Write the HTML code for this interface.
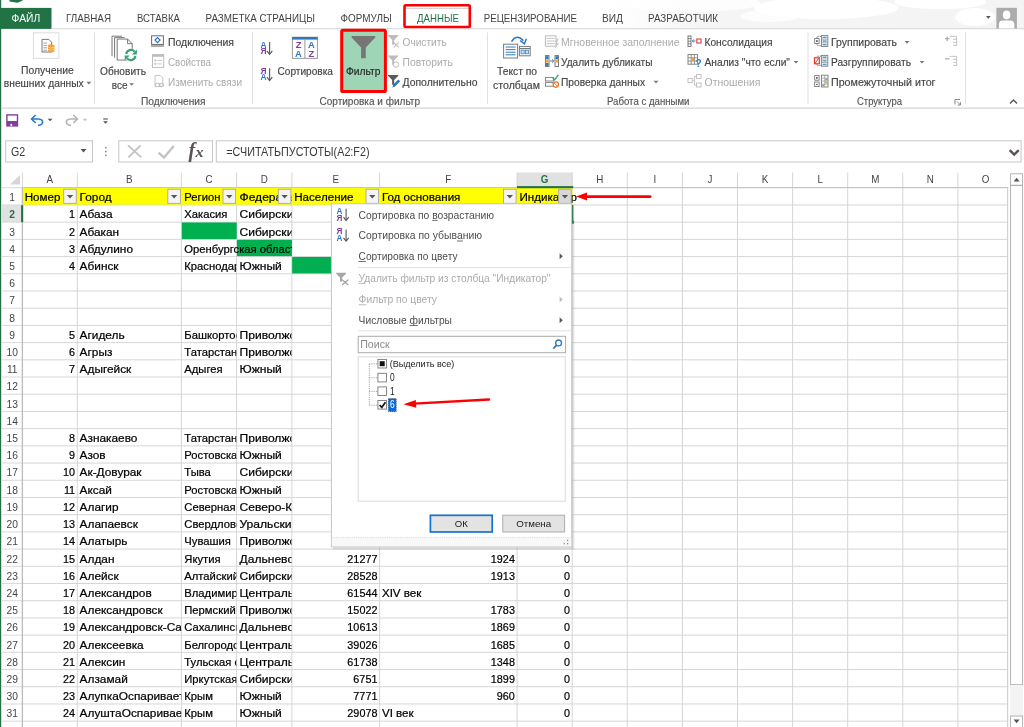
<!DOCTYPE html>
<html lang="ru">
<head>
<meta charset="utf-8">
<title>Excel - Фильтр</title>
<style>
html,body{margin:0;padding:0;background:#fff;overflow:hidden}
body{width:1024px;height:727px;font-family:"Liberation Sans",sans-serif}
svg{display:block;font-family:"Liberation Sans",sans-serif;will-change:transform}
text{white-space:pre}
</style>
</head>
<body>
<svg width="1024" height="727" viewBox="0 0 1024 727">
<g style="will-change:transform">
<rect x="0" y="0" width="1024" height="727" fill="#ffffff"/>
<rect x="2" y="172.5" width="1006" height="15.2" fill="#ffffff"/>
<rect x="517" y="172.5" width="55.3" height="14" fill="#e1e1e1"/>
<rect x="2" y="204.96" width="20.3" height="17.21" fill="#e1e1e1"/>
<rect x="22.4" y="187.75" width="54.9" height="17.21" fill="#ffff00"/>
<rect x="77.3" y="187.75" width="104.1" height="17.21" fill="#ffff00"/>
<rect x="181.4" y="187.75" width="55.2" height="17.21" fill="#ffff00"/>
<rect x="236.6" y="187.75" width="55.3" height="17.21" fill="#ffff00"/>
<rect x="291.9" y="187.75" width="87.7" height="17.21" fill="#ffff00"/>
<rect x="379.6" y="187.75" width="137.5" height="17.21" fill="#ffff00"/>
<rect x="517.1" y="187.75" width="55.1" height="17.21" fill="#ffff00"/>
<rect x="181.4" y="222.16" width="55.2" height="17.21" fill="#00b050"/>
<rect x="236.6" y="239.37" width="55.3" height="17.21" fill="#00b050"/>
<rect x="291.9" y="256.58" width="87.7" height="17.21" fill="#00b050"/>
<line x1="22.4" y1="187.75" x2="1007.7" y2="187.75" stroke="#d6d6d6" stroke-width="1"/>
<line x1="2" y1="187.75" x2="22.4" y2="187.75" stroke="#dadada" stroke-width="1"/>
<line x1="22.4" y1="204.96" x2="1007.7" y2="204.96" stroke="#d6d6d6" stroke-width="1"/>
<line x1="2" y1="204.96" x2="22.4" y2="204.96" stroke="#dadada" stroke-width="1"/>
<line x1="22.4" y1="222.16" x2="1007.7" y2="222.16" stroke="#d6d6d6" stroke-width="1"/>
<line x1="2" y1="222.16" x2="22.4" y2="222.16" stroke="#dadada" stroke-width="1"/>
<line x1="22.4" y1="239.37" x2="1007.7" y2="239.37" stroke="#d6d6d6" stroke-width="1"/>
<line x1="2" y1="239.37" x2="22.4" y2="239.37" stroke="#dadada" stroke-width="1"/>
<line x1="22.4" y1="256.58" x2="1007.7" y2="256.58" stroke="#d6d6d6" stroke-width="1"/>
<line x1="2" y1="256.58" x2="22.4" y2="256.58" stroke="#dadada" stroke-width="1"/>
<line x1="22.4" y1="273.78" x2="1007.7" y2="273.78" stroke="#d6d6d6" stroke-width="1"/>
<line x1="2" y1="273.78" x2="22.4" y2="273.78" stroke="#dadada" stroke-width="1"/>
<line x1="22.4" y1="290.99" x2="1007.7" y2="290.99" stroke="#d6d6d6" stroke-width="1"/>
<line x1="2" y1="290.99" x2="22.4" y2="290.99" stroke="#dadada" stroke-width="1"/>
<line x1="22.4" y1="308.2" x2="1007.7" y2="308.2" stroke="#d6d6d6" stroke-width="1"/>
<line x1="2" y1="308.2" x2="22.4" y2="308.2" stroke="#dadada" stroke-width="1"/>
<line x1="22.4" y1="325.41" x2="1007.7" y2="325.41" stroke="#d6d6d6" stroke-width="1"/>
<line x1="2" y1="325.41" x2="22.4" y2="325.41" stroke="#dadada" stroke-width="1"/>
<line x1="22.4" y1="342.61" x2="1007.7" y2="342.61" stroke="#d6d6d6" stroke-width="1"/>
<line x1="2" y1="342.61" x2="22.4" y2="342.61" stroke="#dadada" stroke-width="1"/>
<line x1="22.4" y1="359.82" x2="1007.7" y2="359.82" stroke="#d6d6d6" stroke-width="1"/>
<line x1="2" y1="359.82" x2="22.4" y2="359.82" stroke="#dadada" stroke-width="1"/>
<line x1="22.4" y1="377.03" x2="1007.7" y2="377.03" stroke="#d6d6d6" stroke-width="1"/>
<line x1="2" y1="377.03" x2="22.4" y2="377.03" stroke="#dadada" stroke-width="1"/>
<line x1="22.4" y1="394.23" x2="1007.7" y2="394.23" stroke="#d6d6d6" stroke-width="1"/>
<line x1="2" y1="394.23" x2="22.4" y2="394.23" stroke="#dadada" stroke-width="1"/>
<line x1="22.4" y1="411.44" x2="1007.7" y2="411.44" stroke="#d6d6d6" stroke-width="1"/>
<line x1="2" y1="411.44" x2="22.4" y2="411.44" stroke="#dadada" stroke-width="1"/>
<line x1="22.4" y1="428.65" x2="1007.7" y2="428.65" stroke="#d6d6d6" stroke-width="1"/>
<line x1="2" y1="428.65" x2="22.4" y2="428.65" stroke="#dadada" stroke-width="1"/>
<line x1="22.4" y1="445.86" x2="1007.7" y2="445.86" stroke="#d6d6d6" stroke-width="1"/>
<line x1="2" y1="445.86" x2="22.4" y2="445.86" stroke="#dadada" stroke-width="1"/>
<line x1="22.4" y1="463.06" x2="1007.7" y2="463.06" stroke="#d6d6d6" stroke-width="1"/>
<line x1="2" y1="463.06" x2="22.4" y2="463.06" stroke="#dadada" stroke-width="1"/>
<line x1="22.4" y1="480.27" x2="1007.7" y2="480.27" stroke="#d6d6d6" stroke-width="1"/>
<line x1="2" y1="480.27" x2="22.4" y2="480.27" stroke="#dadada" stroke-width="1"/>
<line x1="22.4" y1="497.48" x2="1007.7" y2="497.48" stroke="#d6d6d6" stroke-width="1"/>
<line x1="2" y1="497.48" x2="22.4" y2="497.48" stroke="#dadada" stroke-width="1"/>
<line x1="22.4" y1="514.68" x2="1007.7" y2="514.68" stroke="#d6d6d6" stroke-width="1"/>
<line x1="2" y1="514.68" x2="22.4" y2="514.68" stroke="#dadada" stroke-width="1"/>
<line x1="22.4" y1="531.89" x2="1007.7" y2="531.89" stroke="#d6d6d6" stroke-width="1"/>
<line x1="2" y1="531.89" x2="22.4" y2="531.89" stroke="#dadada" stroke-width="1"/>
<line x1="22.4" y1="549.1" x2="1007.7" y2="549.1" stroke="#d6d6d6" stroke-width="1"/>
<line x1="2" y1="549.1" x2="22.4" y2="549.1" stroke="#dadada" stroke-width="1"/>
<line x1="22.4" y1="566.3" x2="1007.7" y2="566.3" stroke="#d6d6d6" stroke-width="1"/>
<line x1="2" y1="566.3" x2="22.4" y2="566.3" stroke="#dadada" stroke-width="1"/>
<line x1="22.4" y1="583.51" x2="1007.7" y2="583.51" stroke="#d6d6d6" stroke-width="1"/>
<line x1="2" y1="583.51" x2="22.4" y2="583.51" stroke="#dadada" stroke-width="1"/>
<line x1="22.4" y1="600.72" x2="1007.7" y2="600.72" stroke="#d6d6d6" stroke-width="1"/>
<line x1="2" y1="600.72" x2="22.4" y2="600.72" stroke="#dadada" stroke-width="1"/>
<line x1="22.4" y1="617.92" x2="1007.7" y2="617.92" stroke="#d6d6d6" stroke-width="1"/>
<line x1="2" y1="617.92" x2="22.4" y2="617.92" stroke="#dadada" stroke-width="1"/>
<line x1="22.4" y1="635.13" x2="1007.7" y2="635.13" stroke="#d6d6d6" stroke-width="1"/>
<line x1="2" y1="635.13" x2="22.4" y2="635.13" stroke="#dadada" stroke-width="1"/>
<line x1="22.4" y1="652.34" x2="1007.7" y2="652.34" stroke="#d6d6d6" stroke-width="1"/>
<line x1="2" y1="652.34" x2="22.4" y2="652.34" stroke="#dadada" stroke-width="1"/>
<line x1="22.4" y1="669.55" x2="1007.7" y2="669.55" stroke="#d6d6d6" stroke-width="1"/>
<line x1="2" y1="669.55" x2="22.4" y2="669.55" stroke="#dadada" stroke-width="1"/>
<line x1="22.4" y1="686.75" x2="1007.7" y2="686.75" stroke="#d6d6d6" stroke-width="1"/>
<line x1="2" y1="686.75" x2="22.4" y2="686.75" stroke="#dadada" stroke-width="1"/>
<line x1="22.4" y1="703.96" x2="1007.7" y2="703.96" stroke="#d6d6d6" stroke-width="1"/>
<line x1="2" y1="703.96" x2="22.4" y2="703.96" stroke="#dadada" stroke-width="1"/>
<line x1="22.4" y1="721.17" x2="1007.7" y2="721.17" stroke="#d6d6d6" stroke-width="1"/>
<line x1="2" y1="721.17" x2="22.4" y2="721.17" stroke="#dadada" stroke-width="1"/>
<line x1="22.4" y1="172.5" x2="22.4" y2="727" stroke="#d6d6d6" stroke-width="1"/>
<line x1="77.3" y1="172.5" x2="77.3" y2="727" stroke="#d6d6d6" stroke-width="1"/>
<line x1="181.4" y1="172.5" x2="181.4" y2="727" stroke="#d6d6d6" stroke-width="1"/>
<line x1="236.6" y1="172.5" x2="236.6" y2="727" stroke="#d6d6d6" stroke-width="1"/>
<line x1="291.9" y1="172.5" x2="291.9" y2="727" stroke="#d6d6d6" stroke-width="1"/>
<line x1="379.6" y1="172.5" x2="379.6" y2="727" stroke="#d6d6d6" stroke-width="1"/>
<line x1="517.1" y1="172.5" x2="517.1" y2="727" stroke="#d6d6d6" stroke-width="1"/>
<line x1="572.2" y1="172.5" x2="572.2" y2="727" stroke="#d6d6d6" stroke-width="1"/>
<line x1="627.3" y1="172.5" x2="627.3" y2="727" stroke="#d6d6d6" stroke-width="1"/>
<line x1="682.4" y1="172.5" x2="682.4" y2="727" stroke="#d6d6d6" stroke-width="1"/>
<line x1="737.5" y1="172.5" x2="737.5" y2="727" stroke="#d6d6d6" stroke-width="1"/>
<line x1="792.6" y1="172.5" x2="792.6" y2="727" stroke="#d6d6d6" stroke-width="1"/>
<line x1="847.7" y1="172.5" x2="847.7" y2="727" stroke="#d6d6d6" stroke-width="1"/>
<line x1="902.8" y1="172.5" x2="902.8" y2="727" stroke="#d6d6d6" stroke-width="1"/>
<line x1="957.9" y1="172.5" x2="957.9" y2="727" stroke="#d6d6d6" stroke-width="1"/>
<line x1="1007.7" y1="187.5" x2="1007.7" y2="727" stroke="#c8c8c8" stroke-width="1"/>
<line x1="22.4" y1="187.5" x2="22.4" y2="727" stroke="#bdbdbd" stroke-width="1.3"/>
<line x1="22.4" y1="187.6" x2="1007.7" y2="187.6" stroke="#c4c4c4" stroke-width="1"/>
<rect x="22.9" y="188.25" width="54.7" height="16.21" fill="#ffff00"/>
<rect x="77.8" y="188.25" width="103.9" height="16.21" fill="#ffff00"/>
<rect x="181.9" y="188.25" width="55" height="16.21" fill="#ffff00"/>
<rect x="237.1" y="188.25" width="55.1" height="16.21" fill="#ffff00"/>
<rect x="292.4" y="188.25" width="87.5" height="16.21" fill="#ffff00"/>
<rect x="380.1" y="188.25" width="137.3" height="16.21" fill="#ffff00"/>
<rect x="517.6" y="188.25" width="54.9" height="16.21" fill="#ffff00"/>
<rect x="181.9" y="222.66" width="54.8" height="16.21" fill="#00b050"/>
<rect x="237.1" y="239.87" width="54.8" height="16.21" fill="#00b050"/>
<rect x="292.4" y="257.08" width="87.2" height="16.21" fill="#00b050"/>
<rect x="517" y="186.1" width="56.2" height="2.1" fill="#217346"/>
<rect x="21.1" y="205.26" width="2.1" height="16.91" fill="#217346"/>
<path d="M20 175 L20 184.6 L10 184.6 Z" fill="#d6d6d6"/>
<text x="49.85" y="183.2" font-size="10.9" fill="#444444" text-anchor="middle" textLength="6.54" lengthAdjust="spacingAndGlyphs">A</text>
<text x="129.35" y="183.2" font-size="10.9" fill="#444444" text-anchor="middle" textLength="6.54" lengthAdjust="spacingAndGlyphs">B</text>
<text x="209" y="183.2" font-size="10.9" fill="#444444" text-anchor="middle" textLength="7.08" lengthAdjust="spacingAndGlyphs">C</text>
<text x="264.25" y="183.2" font-size="10.9" fill="#444444" text-anchor="middle" textLength="7.08" lengthAdjust="spacingAndGlyphs">D</text>
<text x="335.75" y="183.2" font-size="10.9" fill="#444444" text-anchor="middle" textLength="6.54" lengthAdjust="spacingAndGlyphs">E</text>
<text x="448.35" y="183.2" font-size="10.9" fill="#444444" text-anchor="middle" textLength="5.99" lengthAdjust="spacingAndGlyphs">F</text>
<text x="544.65" y="183.2" font-size="10.9" fill="#217346" text-anchor="middle" font-weight="bold" textLength="7.63" lengthAdjust="spacingAndGlyphs">G</text>
<text x="599.75" y="183.2" font-size="10.9" fill="#444444" text-anchor="middle" textLength="7.08" lengthAdjust="spacingAndGlyphs">H</text>
<text x="654.85" y="183.2" font-size="10.9" fill="#444444" text-anchor="middle" textLength="2.73" lengthAdjust="spacingAndGlyphs">I</text>
<text x="709.95" y="183.2" font-size="10.9" fill="#444444" text-anchor="middle" textLength="4.91" lengthAdjust="spacingAndGlyphs">J</text>
<text x="765.05" y="183.2" font-size="10.9" fill="#444444" text-anchor="middle" textLength="6.54" lengthAdjust="spacingAndGlyphs">K</text>
<text x="820.15" y="183.2" font-size="10.9" fill="#444444" text-anchor="middle" textLength="5.46" lengthAdjust="spacingAndGlyphs">L</text>
<text x="875.25" y="183.2" font-size="10.9" fill="#444444" text-anchor="middle" textLength="8.17" lengthAdjust="spacingAndGlyphs">M</text>
<text x="930.35" y="183.2" font-size="10.9" fill="#444444" text-anchor="middle" textLength="7.08" lengthAdjust="spacingAndGlyphs">N</text>
<text x="985.45" y="183.2" font-size="10.9" fill="#444444" text-anchor="middle" textLength="7.63" lengthAdjust="spacingAndGlyphs">O</text>
<text x="12.2" y="201.15" font-size="10.9" fill="#444444" text-anchor="middle" textLength="5.7" lengthAdjust="spacingAndGlyphs">1</text>
<text x="12.2" y="218.36" font-size="10.9" fill="#217346" text-anchor="middle" font-weight="bold" textLength="5.7" lengthAdjust="spacingAndGlyphs">2</text>
<text x="12.2" y="235.56" font-size="10.9" fill="#444444" text-anchor="middle" textLength="5.7" lengthAdjust="spacingAndGlyphs">3</text>
<text x="12.2" y="252.77" font-size="10.9" fill="#444444" text-anchor="middle" textLength="5.7" lengthAdjust="spacingAndGlyphs">4</text>
<text x="12.2" y="269.98" font-size="10.9" fill="#444444" text-anchor="middle" textLength="5.7" lengthAdjust="spacingAndGlyphs">5</text>
<text x="12.2" y="287.18" font-size="10.9" fill="#444444" text-anchor="middle" textLength="5.7" lengthAdjust="spacingAndGlyphs">6</text>
<text x="12.2" y="304.39" font-size="10.9" fill="#444444" text-anchor="middle" textLength="5.7" lengthAdjust="spacingAndGlyphs">7</text>
<text x="12.2" y="321.6" font-size="10.9" fill="#444444" text-anchor="middle" textLength="5.7" lengthAdjust="spacingAndGlyphs">8</text>
<text x="12.2" y="338.81" font-size="10.9" fill="#444444" text-anchor="middle" textLength="5.7" lengthAdjust="spacingAndGlyphs">9</text>
<text x="12.2" y="356.01" font-size="10.9" fill="#444444" text-anchor="middle" textLength="11.4" lengthAdjust="spacingAndGlyphs">10</text>
<text x="12.2" y="373.22" font-size="10.9" fill="#444444" text-anchor="middle" textLength="10.64" lengthAdjust="spacingAndGlyphs">11</text>
<text x="12.2" y="390.43" font-size="10.9" fill="#444444" text-anchor="middle" textLength="11.4" lengthAdjust="spacingAndGlyphs">12</text>
<text x="12.2" y="407.63" font-size="10.9" fill="#444444" text-anchor="middle" textLength="11.4" lengthAdjust="spacingAndGlyphs">13</text>
<text x="12.2" y="424.84" font-size="10.9" fill="#444444" text-anchor="middle" textLength="11.4" lengthAdjust="spacingAndGlyphs">14</text>
<text x="12.2" y="442.05" font-size="10.9" fill="#444444" text-anchor="middle" textLength="11.4" lengthAdjust="spacingAndGlyphs">15</text>
<text x="12.2" y="459.25" font-size="10.9" fill="#444444" text-anchor="middle" textLength="11.4" lengthAdjust="spacingAndGlyphs">16</text>
<text x="12.2" y="476.46" font-size="10.9" fill="#444444" text-anchor="middle" textLength="11.4" lengthAdjust="spacingAndGlyphs">17</text>
<text x="12.2" y="493.67" font-size="10.9" fill="#444444" text-anchor="middle" textLength="11.4" lengthAdjust="spacingAndGlyphs">18</text>
<text x="12.2" y="510.88" font-size="10.9" fill="#444444" text-anchor="middle" textLength="11.4" lengthAdjust="spacingAndGlyphs">19</text>
<text x="12.2" y="528.08" font-size="10.9" fill="#444444" text-anchor="middle" textLength="11.4" lengthAdjust="spacingAndGlyphs">20</text>
<text x="12.2" y="545.29" font-size="10.9" fill="#444444" text-anchor="middle" textLength="11.4" lengthAdjust="spacingAndGlyphs">21</text>
<text x="12.2" y="562.5" font-size="10.9" fill="#444444" text-anchor="middle" textLength="11.4" lengthAdjust="spacingAndGlyphs">22</text>
<text x="12.2" y="579.7" font-size="10.9" fill="#444444" text-anchor="middle" textLength="11.4" lengthAdjust="spacingAndGlyphs">23</text>
<text x="12.2" y="596.91" font-size="10.9" fill="#444444" text-anchor="middle" textLength="11.4" lengthAdjust="spacingAndGlyphs">24</text>
<text x="12.2" y="614.12" font-size="10.9" fill="#444444" text-anchor="middle" textLength="11.4" lengthAdjust="spacingAndGlyphs">25</text>
<text x="12.2" y="631.32" font-size="10.9" fill="#444444" text-anchor="middle" textLength="11.4" lengthAdjust="spacingAndGlyphs">26</text>
<text x="12.2" y="648.53" font-size="10.9" fill="#444444" text-anchor="middle" textLength="11.4" lengthAdjust="spacingAndGlyphs">27</text>
<text x="12.2" y="665.74" font-size="10.9" fill="#444444" text-anchor="middle" textLength="11.4" lengthAdjust="spacingAndGlyphs">28</text>
<text x="12.2" y="682.95" font-size="10.9" fill="#444444" text-anchor="middle" textLength="11.4" lengthAdjust="spacingAndGlyphs">29</text>
<text x="12.2" y="700.15" font-size="10.9" fill="#444444" text-anchor="middle" textLength="11.4" lengthAdjust="spacingAndGlyphs">30</text>
<text x="12.2" y="717.36" font-size="10.9" fill="#444444" text-anchor="middle" textLength="11.4" lengthAdjust="spacingAndGlyphs">31</text>
<svg x="22.4" y="187.75" width="54.6" height="17.21" overflow="hidden">
<text x="2.3" y="13.45" font-size="11.25" fill="#000000" textLength="35.74" lengthAdjust="spacingAndGlyphs" stroke="#000" stroke-width="0.22">Номер</text>
</svg>
<svg x="77.3" y="187.75" width="103.8" height="17.21" overflow="hidden">
<text x="2.3" y="13.45" font-size="11.25" fill="#000000" textLength="32.03" lengthAdjust="spacingAndGlyphs" stroke="#000" stroke-width="0.22">Город</text>
</svg>
<svg x="181.4" y="187.75" width="54.9" height="17.21" overflow="hidden">
<text x="2.9" y="13.45" font-size="11.25" fill="#000000" textLength="36.08" lengthAdjust="spacingAndGlyphs" stroke="#000" stroke-width="0.22">Регион</text>
</svg>
<svg x="236.6" y="187.75" width="55" height="17.21" overflow="hidden">
<text x="2.9" y="13.45" font-size="11.25" fill="#000000" textLength="110.61" lengthAdjust="spacingAndGlyphs" stroke="#000" stroke-width="0.22">Федеральный округ</text>
</svg>
<svg x="291.9" y="187.75" width="87.4" height="17.21" overflow="hidden">
<text x="2.3" y="13.45" font-size="11.25" fill="#000000" textLength="59.3" lengthAdjust="spacingAndGlyphs" stroke="#000" stroke-width="0.22">Население</text>
</svg>
<svg x="379.6" y="187.75" width="137.2" height="17.21" overflow="hidden">
<text x="2.3" y="13.45" font-size="11.25" fill="#000000" textLength="78.52" lengthAdjust="spacingAndGlyphs" stroke="#000" stroke-width="0.22">Год основания</text>
</svg>
<svg x="22.4" y="204.96" width="54.6" height="17.21" overflow="hidden">
<text x="52.7" y="13.45" font-size="11.25" fill="#000000" text-anchor="end" textLength="6.01" lengthAdjust="spacingAndGlyphs" stroke="#000" stroke-width="0.22">1</text>
</svg>
<svg x="77.3" y="204.96" width="103.8" height="17.21" overflow="hidden">
<text x="2.3" y="13.45" font-size="11.25" fill="#000000" textLength="32.88" lengthAdjust="spacingAndGlyphs" stroke="#000" stroke-width="0.22">Абаза</text>
</svg>
<svg x="181.4" y="204.96" width="54.9" height="17.21" overflow="hidden">
<text x="2.9" y="13.45" font-size="11.25" fill="#000000" textLength="43.14" lengthAdjust="spacingAndGlyphs" stroke="#000" stroke-width="0.22">Хакасия</text>
</svg>
<svg x="236.6" y="204.96" width="55" height="17.21" overflow="hidden">
<text x="2.9" y="13.45" font-size="11.25" fill="#000000" textLength="60.65" lengthAdjust="spacingAndGlyphs" stroke="#000" stroke-width="0.22">Сибирский</text>
</svg>
<svg x="22.4" y="222.16" width="54.6" height="17.21" overflow="hidden">
<text x="52.7" y="13.45" font-size="11.25" fill="#000000" text-anchor="end" textLength="6.01" lengthAdjust="spacingAndGlyphs" stroke="#000" stroke-width="0.22">2</text>
</svg>
<svg x="77.3" y="222.16" width="103.8" height="17.21" overflow="hidden">
<text x="2.3" y="13.45" font-size="11.25" fill="#000000" textLength="39.56" lengthAdjust="spacingAndGlyphs" stroke="#000" stroke-width="0.22">Абакан</text>
</svg>
<svg x="236.6" y="222.16" width="55" height="17.21" overflow="hidden">
<text x="2.9" y="13.45" font-size="11.25" fill="#000000" textLength="60.65" lengthAdjust="spacingAndGlyphs" stroke="#000" stroke-width="0.22">Сибирский</text>
</svg>
<svg x="22.4" y="239.37" width="54.6" height="17.21" overflow="hidden">
<text x="52.7" y="13.45" font-size="11.25" fill="#000000" text-anchor="end" textLength="6.01" lengthAdjust="spacingAndGlyphs" stroke="#000" stroke-width="0.22">3</text>
</svg>
<svg x="77.3" y="239.37" width="103.8" height="17.21" overflow="hidden">
<text x="2.3" y="13.45" font-size="11.25" fill="#000000" textLength="53.37" lengthAdjust="spacingAndGlyphs" stroke="#000" stroke-width="0.22">Абдулино</text>
</svg>
<svg x="181.4" y="239.37" width="110.2" height="17.21" overflow="hidden">
<text x="2.9" y="13.45" font-size="11.25" fill="#000000" textLength="117.08" lengthAdjust="spacingAndGlyphs" stroke="#000" stroke-width="0.22">Оренбургская область</text>
</svg>
<svg x="22.4" y="256.58" width="54.6" height="17.21" overflow="hidden">
<text x="52.7" y="13.45" font-size="11.25" fill="#000000" text-anchor="end" textLength="6.01" lengthAdjust="spacingAndGlyphs" stroke="#000" stroke-width="0.22">4</text>
</svg>
<svg x="77.3" y="256.58" width="103.8" height="17.21" overflow="hidden">
<text x="2.3" y="13.45" font-size="11.25" fill="#000000" textLength="38.94" lengthAdjust="spacingAndGlyphs" stroke="#000" stroke-width="0.22">Абинск</text>
</svg>
<svg x="181.4" y="256.58" width="54.9" height="17.21" overflow="hidden">
<text x="2.9" y="13.45" font-size="11.25" fill="#000000" textLength="105.84" lengthAdjust="spacingAndGlyphs" stroke="#000" stroke-width="0.22">Краснодарский край</text>
</svg>
<svg x="236.6" y="256.58" width="55" height="17.21" overflow="hidden">
<text x="2.9" y="13.45" font-size="11.25" fill="#000000" textLength="42.37" lengthAdjust="spacingAndGlyphs" stroke="#000" stroke-width="0.22">Южный</text>
</svg>
<svg x="22.4" y="325.41" width="54.6" height="17.21" overflow="hidden">
<text x="52.7" y="13.45" font-size="11.25" fill="#000000" text-anchor="end" textLength="6.01" lengthAdjust="spacingAndGlyphs" stroke="#000" stroke-width="0.22">5</text>
</svg>
<svg x="77.3" y="325.41" width="103.8" height="17.21" overflow="hidden">
<text x="2.3" y="13.45" font-size="11.25" fill="#000000" textLength="45.01" lengthAdjust="spacingAndGlyphs" stroke="#000" stroke-width="0.22">Агидель</text>
</svg>
<svg x="181.4" y="325.41" width="54.9" height="17.21" overflow="hidden">
<text x="2.9" y="13.45" font-size="11.25" fill="#000000" textLength="74.3" lengthAdjust="spacingAndGlyphs" stroke="#000" stroke-width="0.22">Башкортостан</text>
</svg>
<svg x="236.6" y="325.41" width="55" height="17.21" overflow="hidden">
<text x="2.9" y="13.45" font-size="11.25" fill="#000000" textLength="74.8" lengthAdjust="spacingAndGlyphs" stroke="#000" stroke-width="0.22">Приволжский</text>
</svg>
<svg x="22.4" y="342.61" width="54.6" height="17.21" overflow="hidden">
<text x="52.7" y="13.45" font-size="11.25" fill="#000000" text-anchor="end" textLength="6.01" lengthAdjust="spacingAndGlyphs" stroke="#000" stroke-width="0.22">6</text>
</svg>
<svg x="77.3" y="342.61" width="103.8" height="17.21" overflow="hidden">
<text x="2.3" y="13.45" font-size="11.25" fill="#000000" textLength="32.74" lengthAdjust="spacingAndGlyphs" stroke="#000" stroke-width="0.22">Агрыз</text>
</svg>
<svg x="181.4" y="342.61" width="54.9" height="17.21" overflow="hidden">
<text x="2.9" y="13.45" font-size="11.25" fill="#000000" textLength="52.98" lengthAdjust="spacingAndGlyphs" stroke="#000" stroke-width="0.22">Татарстан</text>
</svg>
<svg x="236.6" y="342.61" width="55" height="17.21" overflow="hidden">
<text x="2.9" y="13.45" font-size="11.25" fill="#000000" textLength="74.8" lengthAdjust="spacingAndGlyphs" stroke="#000" stroke-width="0.22">Приволжский</text>
</svg>
<svg x="22.4" y="359.82" width="54.6" height="17.21" overflow="hidden">
<text x="52.7" y="13.45" font-size="11.25" fill="#000000" text-anchor="end" textLength="6.01" lengthAdjust="spacingAndGlyphs" stroke="#000" stroke-width="0.22">7</text>
</svg>
<svg x="77.3" y="359.82" width="103.8" height="17.21" overflow="hidden">
<text x="2.3" y="13.45" font-size="11.25" fill="#000000" textLength="51.68" lengthAdjust="spacingAndGlyphs" stroke="#000" stroke-width="0.22">Адыгейск</text>
</svg>
<svg x="181.4" y="359.82" width="54.9" height="17.21" overflow="hidden">
<text x="2.9" y="13.45" font-size="11.25" fill="#000000" textLength="38.32" lengthAdjust="spacingAndGlyphs" stroke="#000" stroke-width="0.22">Адыгея</text>
</svg>
<svg x="236.6" y="359.82" width="55" height="17.21" overflow="hidden">
<text x="2.9" y="13.45" font-size="11.25" fill="#000000" textLength="42.37" lengthAdjust="spacingAndGlyphs" stroke="#000" stroke-width="0.22">Южный</text>
</svg>
<svg x="22.4" y="428.65" width="54.6" height="17.21" overflow="hidden">
<text x="52.7" y="13.45" font-size="11.25" fill="#000000" text-anchor="end" textLength="6.01" lengthAdjust="spacingAndGlyphs" stroke="#000" stroke-width="0.22">8</text>
</svg>
<svg x="77.3" y="428.65" width="103.8" height="17.21" overflow="hidden">
<text x="2.3" y="13.45" font-size="11.25" fill="#000000" textLength="57.81" lengthAdjust="spacingAndGlyphs" stroke="#000" stroke-width="0.22">Азнакаево</text>
</svg>
<svg x="181.4" y="428.65" width="54.9" height="17.21" overflow="hidden">
<text x="2.9" y="13.45" font-size="11.25" fill="#000000" textLength="52.98" lengthAdjust="spacingAndGlyphs" stroke="#000" stroke-width="0.22">Татарстан</text>
</svg>
<svg x="236.6" y="428.65" width="55" height="17.21" overflow="hidden">
<text x="2.9" y="13.45" font-size="11.25" fill="#000000" textLength="74.8" lengthAdjust="spacingAndGlyphs" stroke="#000" stroke-width="0.22">Приволжский</text>
</svg>
<svg x="22.4" y="445.86" width="54.6" height="17.21" overflow="hidden">
<text x="52.7" y="13.45" font-size="11.25" fill="#000000" text-anchor="end" textLength="6.01" lengthAdjust="spacingAndGlyphs" stroke="#000" stroke-width="0.22">9</text>
</svg>
<svg x="77.3" y="445.86" width="103.8" height="17.21" overflow="hidden">
<text x="2.3" y="13.45" font-size="11.25" fill="#000000" textLength="26.07" lengthAdjust="spacingAndGlyphs" stroke="#000" stroke-width="0.22">Азов</text>
</svg>
<svg x="181.4" y="445.86" width="54.9" height="17.21" overflow="hidden">
<text x="2.9" y="13.45" font-size="11.25" fill="#000000" textLength="103.84" lengthAdjust="spacingAndGlyphs" stroke="#000" stroke-width="0.22">Ростовская область</text>
</svg>
<svg x="236.6" y="445.86" width="55" height="17.21" overflow="hidden">
<text x="2.9" y="13.45" font-size="11.25" fill="#000000" textLength="42.37" lengthAdjust="spacingAndGlyphs" stroke="#000" stroke-width="0.22">Южный</text>
</svg>
<svg x="22.4" y="463.06" width="54.6" height="17.21" overflow="hidden">
<text x="52.7" y="13.45" font-size="11.25" fill="#000000" text-anchor="end" textLength="12.01" lengthAdjust="spacingAndGlyphs" stroke="#000" stroke-width="0.22">10</text>
</svg>
<svg x="77.3" y="463.06" width="103.8" height="17.21" overflow="hidden">
<text x="2.3" y="13.45" font-size="11.25" fill="#000000" textLength="61.93" lengthAdjust="spacingAndGlyphs" stroke="#000" stroke-width="0.22">Ак-Довурак</text>
</svg>
<svg x="181.4" y="463.06" width="54.9" height="17.21" overflow="hidden">
<text x="2.9" y="13.45" font-size="11.25" fill="#000000" textLength="26.54" lengthAdjust="spacingAndGlyphs" stroke="#000" stroke-width="0.22">Тыва</text>
</svg>
<svg x="236.6" y="463.06" width="55" height="17.21" overflow="hidden">
<text x="2.9" y="13.45" font-size="11.25" fill="#000000" textLength="60.65" lengthAdjust="spacingAndGlyphs" stroke="#000" stroke-width="0.22">Сибирский</text>
</svg>
<svg x="22.4" y="480.27" width="54.6" height="17.21" overflow="hidden">
<text x="52.7" y="13.45" font-size="11.25" fill="#000000" text-anchor="end" textLength="11.21" lengthAdjust="spacingAndGlyphs" stroke="#000" stroke-width="0.22">11</text>
</svg>
<svg x="77.3" y="480.27" width="103.8" height="17.21" overflow="hidden">
<text x="2.3" y="13.45" font-size="11.25" fill="#000000" textLength="32.33" lengthAdjust="spacingAndGlyphs" stroke="#000" stroke-width="0.22">Аксай</text>
</svg>
<svg x="181.4" y="480.27" width="54.9" height="17.21" overflow="hidden">
<text x="2.9" y="13.45" font-size="11.25" fill="#000000" textLength="103.84" lengthAdjust="spacingAndGlyphs" stroke="#000" stroke-width="0.22">Ростовская область</text>
</svg>
<svg x="236.6" y="480.27" width="55" height="17.21" overflow="hidden">
<text x="2.9" y="13.45" font-size="11.25" fill="#000000" textLength="42.37" lengthAdjust="spacingAndGlyphs" stroke="#000" stroke-width="0.22">Южный</text>
</svg>
<svg x="22.4" y="497.48" width="54.6" height="17.21" overflow="hidden">
<text x="52.7" y="13.45" font-size="11.25" fill="#000000" text-anchor="end" textLength="12.01" lengthAdjust="spacingAndGlyphs" stroke="#000" stroke-width="0.22">12</text>
</svg>
<svg x="77.3" y="497.48" width="103.8" height="17.21" overflow="hidden">
<text x="2.3" y="13.45" font-size="11.25" fill="#000000" textLength="38.91" lengthAdjust="spacingAndGlyphs" stroke="#000" stroke-width="0.22">Алагир</text>
</svg>
<svg x="181.4" y="497.48" width="54.9" height="17.21" overflow="hidden">
<text x="2.9" y="13.45" font-size="11.25" fill="#000000" textLength="92.12" lengthAdjust="spacingAndGlyphs" stroke="#000" stroke-width="0.22">Северная Осетия</text>
</svg>
<svg x="236.6" y="497.48" width="55" height="17.21" overflow="hidden">
<text x="2.9" y="13.45" font-size="11.25" fill="#000000" textLength="108.38" lengthAdjust="spacingAndGlyphs" stroke="#000" stroke-width="0.22">Северо-Кавказский</text>
</svg>
<svg x="22.4" y="514.68" width="54.6" height="17.21" overflow="hidden">
<text x="52.7" y="13.45" font-size="11.25" fill="#000000" text-anchor="end" textLength="12.01" lengthAdjust="spacingAndGlyphs" stroke="#000" stroke-width="0.22">13</text>
</svg>
<svg x="77.3" y="514.68" width="103.8" height="17.21" overflow="hidden">
<text x="2.3" y="13.45" font-size="11.25" fill="#000000" textLength="58.24" lengthAdjust="spacingAndGlyphs" stroke="#000" stroke-width="0.22">Алапаевск</text>
</svg>
<svg x="181.4" y="514.68" width="54.9" height="17.21" overflow="hidden">
<text x="2.9" y="13.45" font-size="11.25" fill="#000000" textLength="119.39" lengthAdjust="spacingAndGlyphs" stroke="#000" stroke-width="0.22">Свердловская область</text>
</svg>
<svg x="236.6" y="514.68" width="55" height="17.21" overflow="hidden">
<text x="2.9" y="13.45" font-size="11.25" fill="#000000" textLength="58.7" lengthAdjust="spacingAndGlyphs" stroke="#000" stroke-width="0.22">Уральский</text>
</svg>
<svg x="22.4" y="531.89" width="54.6" height="17.21" overflow="hidden">
<text x="52.7" y="13.45" font-size="11.25" fill="#000000" text-anchor="end" textLength="12.01" lengthAdjust="spacingAndGlyphs" stroke="#000" stroke-width="0.22">14</text>
</svg>
<svg x="77.3" y="531.89" width="103.8" height="17.21" overflow="hidden">
<text x="2.3" y="13.45" font-size="11.25" fill="#000000" textLength="47.82" lengthAdjust="spacingAndGlyphs" stroke="#000" stroke-width="0.22">Алатырь</text>
</svg>
<svg x="181.4" y="531.89" width="54.9" height="17.21" overflow="hidden">
<text x="2.9" y="13.45" font-size="11.25" fill="#000000" textLength="46.58" lengthAdjust="spacingAndGlyphs" stroke="#000" stroke-width="0.22">Чувашия</text>
</svg>
<svg x="236.6" y="531.89" width="55" height="17.21" overflow="hidden">
<text x="2.9" y="13.45" font-size="11.25" fill="#000000" textLength="74.8" lengthAdjust="spacingAndGlyphs" stroke="#000" stroke-width="0.22">Приволжский</text>
</svg>
<svg x="22.4" y="549.1" width="54.6" height="17.21" overflow="hidden">
<text x="52.7" y="13.45" font-size="11.25" fill="#000000" text-anchor="end" textLength="12.01" lengthAdjust="spacingAndGlyphs" stroke="#000" stroke-width="0.22">15</text>
</svg>
<svg x="77.3" y="549.1" width="103.8" height="17.21" overflow="hidden">
<text x="2.3" y="13.45" font-size="11.25" fill="#000000" textLength="34.84" lengthAdjust="spacingAndGlyphs" stroke="#000" stroke-width="0.22">Алдан</text>
</svg>
<svg x="181.4" y="549.1" width="54.9" height="17.21" overflow="hidden">
<text x="2.9" y="13.45" font-size="11.25" fill="#000000" textLength="36.29" lengthAdjust="spacingAndGlyphs" stroke="#000" stroke-width="0.22">Якутия</text>
</svg>
<svg x="236.6" y="549.1" width="55" height="17.21" overflow="hidden">
<text x="2.9" y="13.45" font-size="11.25" fill="#000000" textLength="100.86" lengthAdjust="spacingAndGlyphs" stroke="#000" stroke-width="0.22">Дальневосточный</text>
</svg>
<svg x="291.9" y="549.1" width="87.4" height="17.21" overflow="hidden">
<text x="85.5" y="13.45" font-size="11.25" fill="#000000" text-anchor="end" textLength="30.03" lengthAdjust="spacingAndGlyphs" stroke="#000" stroke-width="0.22">21277</text>
</svg>
<svg x="379.6" y="549.1" width="137.2" height="17.21" overflow="hidden">
<text x="135.3" y="13.45" font-size="11.25" fill="#000000" text-anchor="end" textLength="24.02" lengthAdjust="spacingAndGlyphs" stroke="#000" stroke-width="0.22">1924</text>
</svg>
<svg x="517.1" y="549.1" width="54.8" height="17.21" overflow="hidden">
<text x="52.9" y="13.45" font-size="11.25" fill="#000000" text-anchor="end" textLength="6.01" lengthAdjust="spacingAndGlyphs" stroke="#000" stroke-width="0.22">0</text>
</svg>
<svg x="22.4" y="566.3" width="54.6" height="17.21" overflow="hidden">
<text x="52.7" y="13.45" font-size="11.25" fill="#000000" text-anchor="end" textLength="12.01" lengthAdjust="spacingAndGlyphs" stroke="#000" stroke-width="0.22">16</text>
</svg>
<svg x="77.3" y="566.3" width="103.8" height="17.21" overflow="hidden">
<text x="2.3" y="13.45" font-size="11.25" fill="#000000" textLength="39.11" lengthAdjust="spacingAndGlyphs" stroke="#000" stroke-width="0.22">Алейск</text>
</svg>
<svg x="181.4" y="566.3" width="54.9" height="17.21" overflow="hidden">
<text x="2.9" y="13.45" font-size="11.25" fill="#000000" textLength="81.51" lengthAdjust="spacingAndGlyphs" stroke="#000" stroke-width="0.22">Алтайский край</text>
</svg>
<svg x="236.6" y="566.3" width="55" height="17.21" overflow="hidden">
<text x="2.9" y="13.45" font-size="11.25" fill="#000000" textLength="60.65" lengthAdjust="spacingAndGlyphs" stroke="#000" stroke-width="0.22">Сибирский</text>
</svg>
<svg x="291.9" y="566.3" width="87.4" height="17.21" overflow="hidden">
<text x="85.5" y="13.45" font-size="11.25" fill="#000000" text-anchor="end" textLength="30.03" lengthAdjust="spacingAndGlyphs" stroke="#000" stroke-width="0.22">28528</text>
</svg>
<svg x="379.6" y="566.3" width="137.2" height="17.21" overflow="hidden">
<text x="135.3" y="13.45" font-size="11.25" fill="#000000" text-anchor="end" textLength="24.02" lengthAdjust="spacingAndGlyphs" stroke="#000" stroke-width="0.22">1913</text>
</svg>
<svg x="517.1" y="566.3" width="54.8" height="17.21" overflow="hidden">
<text x="52.9" y="13.45" font-size="11.25" fill="#000000" text-anchor="end" textLength="6.01" lengthAdjust="spacingAndGlyphs" stroke="#000" stroke-width="0.22">0</text>
</svg>
<svg x="22.4" y="583.51" width="54.6" height="17.21" overflow="hidden">
<text x="52.7" y="13.45" font-size="11.25" fill="#000000" text-anchor="end" textLength="12.01" lengthAdjust="spacingAndGlyphs" stroke="#000" stroke-width="0.22">17</text>
</svg>
<svg x="77.3" y="583.51" width="103.8" height="17.21" overflow="hidden">
<text x="2.3" y="13.45" font-size="11.25" fill="#000000" textLength="72.12" lengthAdjust="spacingAndGlyphs" stroke="#000" stroke-width="0.22">Александров</text>
</svg>
<svg x="181.4" y="583.51" width="54.9" height="17.21" overflow="hidden">
<text x="2.9" y="13.45" font-size="11.25" fill="#000000" textLength="121.24" lengthAdjust="spacingAndGlyphs" stroke="#000" stroke-width="0.22">Владимирская область</text>
</svg>
<svg x="236.6" y="583.51" width="55" height="17.21" overflow="hidden">
<text x="2.9" y="13.45" font-size="11.25" fill="#000000" textLength="76.7" lengthAdjust="spacingAndGlyphs" stroke="#000" stroke-width="0.22">Центральный</text>
</svg>
<svg x="291.9" y="583.51" width="87.4" height="17.21" overflow="hidden">
<text x="85.5" y="13.45" font-size="11.25" fill="#000000" text-anchor="end" textLength="30.03" lengthAdjust="spacingAndGlyphs" stroke="#000" stroke-width="0.22">61544</text>
</svg>
<svg x="379.6" y="583.51" width="137.2" height="17.21" overflow="hidden">
<text x="2.3" y="13.45" font-size="11.25" fill="#000000" textLength="39.51" lengthAdjust="spacingAndGlyphs" stroke="#000" stroke-width="0.22">XIV век</text>
</svg>
<svg x="517.1" y="583.51" width="54.8" height="17.21" overflow="hidden">
<text x="52.9" y="13.45" font-size="11.25" fill="#000000" text-anchor="end" textLength="6.01" lengthAdjust="spacingAndGlyphs" stroke="#000" stroke-width="0.22">0</text>
</svg>
<svg x="22.4" y="600.72" width="54.6" height="17.21" overflow="hidden">
<text x="52.7" y="13.45" font-size="11.25" fill="#000000" text-anchor="end" textLength="12.01" lengthAdjust="spacingAndGlyphs" stroke="#000" stroke-width="0.22">18</text>
</svg>
<svg x="77.3" y="600.72" width="103.8" height="17.21" overflow="hidden">
<text x="2.3" y="13.45" font-size="11.25" fill="#000000" textLength="83.09" lengthAdjust="spacingAndGlyphs" stroke="#000" stroke-width="0.22">Александровск</text>
</svg>
<svg x="181.4" y="600.72" width="54.9" height="17.21" overflow="hidden">
<text x="2.9" y="13.45" font-size="11.25" fill="#000000" textLength="78.21" lengthAdjust="spacingAndGlyphs" stroke="#000" stroke-width="0.22">Пермский край</text>
</svg>
<svg x="236.6" y="600.72" width="55" height="17.21" overflow="hidden">
<text x="2.9" y="13.45" font-size="11.25" fill="#000000" textLength="74.8" lengthAdjust="spacingAndGlyphs" stroke="#000" stroke-width="0.22">Приволжский</text>
</svg>
<svg x="291.9" y="600.72" width="87.4" height="17.21" overflow="hidden">
<text x="85.5" y="13.45" font-size="11.25" fill="#000000" text-anchor="end" textLength="30.03" lengthAdjust="spacingAndGlyphs" stroke="#000" stroke-width="0.22">15022</text>
</svg>
<svg x="379.6" y="600.72" width="137.2" height="17.21" overflow="hidden">
<text x="135.3" y="13.45" font-size="11.25" fill="#000000" text-anchor="end" textLength="24.02" lengthAdjust="spacingAndGlyphs" stroke="#000" stroke-width="0.22">1783</text>
</svg>
<svg x="517.1" y="600.72" width="54.8" height="17.21" overflow="hidden">
<text x="52.9" y="13.45" font-size="11.25" fill="#000000" text-anchor="end" textLength="6.01" lengthAdjust="spacingAndGlyphs" stroke="#000" stroke-width="0.22">0</text>
</svg>
<svg x="22.4" y="617.92" width="54.6" height="17.21" overflow="hidden">
<text x="52.7" y="13.45" font-size="11.25" fill="#000000" text-anchor="end" textLength="12.01" lengthAdjust="spacingAndGlyphs" stroke="#000" stroke-width="0.22">19</text>
</svg>
<svg x="77.3" y="617.92" width="103.8" height="17.21" overflow="hidden">
<text x="2.3" y="13.45" font-size="11.25" fill="#000000" textLength="159.08" lengthAdjust="spacingAndGlyphs" stroke="#000" stroke-width="0.22">Александровск-Сахалинский</text>
</svg>
<svg x="181.4" y="617.92" width="54.9" height="17.21" overflow="hidden">
<text x="2.9" y="13.45" font-size="11.25" fill="#000000" textLength="113.13" lengthAdjust="spacingAndGlyphs" stroke="#000" stroke-width="0.22">Сахалинская область</text>
</svg>
<svg x="236.6" y="617.92" width="55" height="17.21" overflow="hidden">
<text x="2.9" y="13.45" font-size="11.25" fill="#000000" textLength="100.86" lengthAdjust="spacingAndGlyphs" stroke="#000" stroke-width="0.22">Дальневосточный</text>
</svg>
<svg x="291.9" y="617.92" width="87.4" height="17.21" overflow="hidden">
<text x="85.5" y="13.45" font-size="11.25" fill="#000000" text-anchor="end" textLength="30.03" lengthAdjust="spacingAndGlyphs" stroke="#000" stroke-width="0.22">10613</text>
</svg>
<svg x="379.6" y="617.92" width="137.2" height="17.21" overflow="hidden">
<text x="135.3" y="13.45" font-size="11.25" fill="#000000" text-anchor="end" textLength="24.02" lengthAdjust="spacingAndGlyphs" stroke="#000" stroke-width="0.22">1869</text>
</svg>
<svg x="517.1" y="617.92" width="54.8" height="17.21" overflow="hidden">
<text x="52.9" y="13.45" font-size="11.25" fill="#000000" text-anchor="end" textLength="6.01" lengthAdjust="spacingAndGlyphs" stroke="#000" stroke-width="0.22">0</text>
</svg>
<svg x="22.4" y="635.13" width="54.6" height="17.21" overflow="hidden">
<text x="52.7" y="13.45" font-size="11.25" fill="#000000" text-anchor="end" textLength="12.01" lengthAdjust="spacingAndGlyphs" stroke="#000" stroke-width="0.22">20</text>
</svg>
<svg x="77.3" y="635.13" width="103.8" height="17.21" overflow="hidden">
<text x="2.3" y="13.45" font-size="11.25" fill="#000000" textLength="64.12" lengthAdjust="spacingAndGlyphs" stroke="#000" stroke-width="0.22">Алексеевка</text>
</svg>
<svg x="181.4" y="635.13" width="54.9" height="17.21" overflow="hidden">
<text x="2.9" y="13.45" font-size="11.25" fill="#000000" textLength="116.57" lengthAdjust="spacingAndGlyphs" stroke="#000" stroke-width="0.22">Белгородская область</text>
</svg>
<svg x="236.6" y="635.13" width="55" height="17.21" overflow="hidden">
<text x="2.9" y="13.45" font-size="11.25" fill="#000000" textLength="76.7" lengthAdjust="spacingAndGlyphs" stroke="#000" stroke-width="0.22">Центральный</text>
</svg>
<svg x="291.9" y="635.13" width="87.4" height="17.21" overflow="hidden">
<text x="85.5" y="13.45" font-size="11.25" fill="#000000" text-anchor="end" textLength="30.03" lengthAdjust="spacingAndGlyphs" stroke="#000" stroke-width="0.22">39026</text>
</svg>
<svg x="379.6" y="635.13" width="137.2" height="17.21" overflow="hidden">
<text x="135.3" y="13.45" font-size="11.25" fill="#000000" text-anchor="end" textLength="24.02" lengthAdjust="spacingAndGlyphs" stroke="#000" stroke-width="0.22">1685</text>
</svg>
<svg x="517.1" y="635.13" width="54.8" height="17.21" overflow="hidden">
<text x="52.9" y="13.45" font-size="11.25" fill="#000000" text-anchor="end" textLength="6.01" lengthAdjust="spacingAndGlyphs" stroke="#000" stroke-width="0.22">0</text>
</svg>
<svg x="22.4" y="652.34" width="54.6" height="17.21" overflow="hidden">
<text x="52.7" y="13.45" font-size="11.25" fill="#000000" text-anchor="end" textLength="12.01" lengthAdjust="spacingAndGlyphs" stroke="#000" stroke-width="0.22">21</text>
</svg>
<svg x="77.3" y="652.34" width="103.8" height="17.21" overflow="hidden">
<text x="2.3" y="13.45" font-size="11.25" fill="#000000" textLength="45.78" lengthAdjust="spacingAndGlyphs" stroke="#000" stroke-width="0.22">Алексин</text>
</svg>
<svg x="181.4" y="652.34" width="54.9" height="17.21" overflow="hidden">
<text x="2.9" y="13.45" font-size="11.25" fill="#000000" textLength="91.87" lengthAdjust="spacingAndGlyphs" stroke="#000" stroke-width="0.22">Тульская область</text>
</svg>
<svg x="236.6" y="652.34" width="55" height="17.21" overflow="hidden">
<text x="2.9" y="13.45" font-size="11.25" fill="#000000" textLength="76.7" lengthAdjust="spacingAndGlyphs" stroke="#000" stroke-width="0.22">Центральный</text>
</svg>
<svg x="291.9" y="652.34" width="87.4" height="17.21" overflow="hidden">
<text x="85.5" y="13.45" font-size="11.25" fill="#000000" text-anchor="end" textLength="30.03" lengthAdjust="spacingAndGlyphs" stroke="#000" stroke-width="0.22">61738</text>
</svg>
<svg x="379.6" y="652.34" width="137.2" height="17.21" overflow="hidden">
<text x="135.3" y="13.45" font-size="11.25" fill="#000000" text-anchor="end" textLength="24.02" lengthAdjust="spacingAndGlyphs" stroke="#000" stroke-width="0.22">1348</text>
</svg>
<svg x="517.1" y="652.34" width="54.8" height="17.21" overflow="hidden">
<text x="52.9" y="13.45" font-size="11.25" fill="#000000" text-anchor="end" textLength="6.01" lengthAdjust="spacingAndGlyphs" stroke="#000" stroke-width="0.22">0</text>
</svg>
<svg x="22.4" y="669.55" width="54.6" height="17.21" overflow="hidden">
<text x="52.7" y="13.45" font-size="11.25" fill="#000000" text-anchor="end" textLength="12.01" lengthAdjust="spacingAndGlyphs" stroke="#000" stroke-width="0.22">22</text>
</svg>
<svg x="77.3" y="669.55" width="103.8" height="17.21" overflow="hidden">
<text x="2.3" y="13.45" font-size="11.25" fill="#000000" textLength="48.16" lengthAdjust="spacingAndGlyphs" stroke="#000" stroke-width="0.22">Алзамай</text>
</svg>
<svg x="181.4" y="669.55" width="54.9" height="17.21" overflow="hidden">
<text x="2.9" y="13.45" font-size="11.25" fill="#000000" textLength="97.86" lengthAdjust="spacingAndGlyphs" stroke="#000" stroke-width="0.22">Иркутская область</text>
</svg>
<svg x="236.6" y="669.55" width="55" height="17.21" overflow="hidden">
<text x="2.9" y="13.45" font-size="11.25" fill="#000000" textLength="60.65" lengthAdjust="spacingAndGlyphs" stroke="#000" stroke-width="0.22">Сибирский</text>
</svg>
<svg x="291.9" y="669.55" width="87.4" height="17.21" overflow="hidden">
<text x="85.5" y="13.45" font-size="11.25" fill="#000000" text-anchor="end" textLength="24.02" lengthAdjust="spacingAndGlyphs" stroke="#000" stroke-width="0.22">6751</text>
</svg>
<svg x="379.6" y="669.55" width="137.2" height="17.21" overflow="hidden">
<text x="135.3" y="13.45" font-size="11.25" fill="#000000" text-anchor="end" textLength="24.02" lengthAdjust="spacingAndGlyphs" stroke="#000" stroke-width="0.22">1899</text>
</svg>
<svg x="517.1" y="669.55" width="54.8" height="17.21" overflow="hidden">
<text x="52.9" y="13.45" font-size="11.25" fill="#000000" text-anchor="end" textLength="6.01" lengthAdjust="spacingAndGlyphs" stroke="#000" stroke-width="0.22">0</text>
</svg>
<svg x="22.4" y="686.75" width="54.6" height="17.21" overflow="hidden">
<text x="52.7" y="13.45" font-size="11.25" fill="#000000" text-anchor="end" textLength="12.01" lengthAdjust="spacingAndGlyphs" stroke="#000" stroke-width="0.22">23</text>
</svg>
<svg x="77.3" y="686.75" width="103.8" height="17.21" overflow="hidden">
<text x="2.3" y="13.45" font-size="11.25" fill="#000000" textLength="117.06" lengthAdjust="spacingAndGlyphs" stroke="#000" stroke-width="0.22">АлупкаОспаривается</text>
</svg>
<svg x="181.4" y="686.75" width="54.9" height="17.21" overflow="hidden">
<text x="2.9" y="13.45" font-size="11.25" fill="#000000" textLength="28.6" lengthAdjust="spacingAndGlyphs" stroke="#000" stroke-width="0.22">Крым</text>
</svg>
<svg x="236.6" y="686.75" width="55" height="17.21" overflow="hidden">
<text x="2.9" y="13.45" font-size="11.25" fill="#000000" textLength="42.37" lengthAdjust="spacingAndGlyphs" stroke="#000" stroke-width="0.22">Южный</text>
</svg>
<svg x="291.9" y="686.75" width="87.4" height="17.21" overflow="hidden">
<text x="85.5" y="13.45" font-size="11.25" fill="#000000" text-anchor="end" textLength="24.02" lengthAdjust="spacingAndGlyphs" stroke="#000" stroke-width="0.22">7771</text>
</svg>
<svg x="379.6" y="686.75" width="137.2" height="17.21" overflow="hidden">
<text x="135.3" y="13.45" font-size="11.25" fill="#000000" text-anchor="end" textLength="18.02" lengthAdjust="spacingAndGlyphs" stroke="#000" stroke-width="0.22">960</text>
</svg>
<svg x="517.1" y="686.75" width="54.8" height="17.21" overflow="hidden">
<text x="52.9" y="13.45" font-size="11.25" fill="#000000" text-anchor="end" textLength="6.01" lengthAdjust="spacingAndGlyphs" stroke="#000" stroke-width="0.22">0</text>
</svg>
<svg x="22.4" y="703.96" width="54.6" height="17.21" overflow="hidden">
<text x="52.7" y="13.45" font-size="11.25" fill="#000000" text-anchor="end" textLength="12.01" lengthAdjust="spacingAndGlyphs" stroke="#000" stroke-width="0.22">24</text>
</svg>
<svg x="77.3" y="703.96" width="103.8" height="17.21" overflow="hidden">
<text x="2.3" y="13.45" font-size="11.25" fill="#000000" textLength="120" lengthAdjust="spacingAndGlyphs" stroke="#000" stroke-width="0.22">АлуштаОспаривается</text>
</svg>
<svg x="181.4" y="703.96" width="54.9" height="17.21" overflow="hidden">
<text x="2.9" y="13.45" font-size="11.25" fill="#000000" textLength="28.6" lengthAdjust="spacingAndGlyphs" stroke="#000" stroke-width="0.22">Крым</text>
</svg>
<svg x="236.6" y="703.96" width="55" height="17.21" overflow="hidden">
<text x="2.9" y="13.45" font-size="11.25" fill="#000000" textLength="42.37" lengthAdjust="spacingAndGlyphs" stroke="#000" stroke-width="0.22">Южный</text>
</svg>
<svg x="291.9" y="703.96" width="87.4" height="17.21" overflow="hidden">
<text x="85.5" y="13.45" font-size="11.25" fill="#000000" text-anchor="end" textLength="30.03" lengthAdjust="spacingAndGlyphs" stroke="#000" stroke-width="0.22">29078</text>
</svg>
<svg x="379.6" y="703.96" width="137.2" height="17.21" overflow="hidden">
<text x="2.3" y="13.45" font-size="11.25" fill="#000000" textLength="31.77" lengthAdjust="spacingAndGlyphs" stroke="#000" stroke-width="0.22">VI век</text>
</svg>
<svg x="517.1" y="703.96" width="54.8" height="17.21" overflow="hidden">
<text x="52.9" y="13.45" font-size="11.25" fill="#000000" text-anchor="end" textLength="6.01" lengthAdjust="spacingAndGlyphs" stroke="#000" stroke-width="0.22">0</text>
</svg>
<svg x="517.1" y="187.75" width="109.9" height="17.21" overflow="hidden">
<text x="2.3" y="13.45" font-size="11.25" fill="#000000" textLength="57.65" lengthAdjust="spacingAndGlyphs" stroke="#000" stroke-width="0.22">Индикатор</text>
</svg>
<rect x="63.7" y="189.25" width="12.6" height="14.1" fill="#f4f4f4" stroke="#a8a8a8" stroke-width="0.9"/>
<path d="M66.8 195 L73.2 195 L70 198.6 Z" fill="#555"/>
<rect x="167.8" y="189.25" width="12.6" height="14.1" fill="#f4f4f4" stroke="#a8a8a8" stroke-width="0.9"/>
<path d="M170.9 195 L177.3 195 L174.1 198.6 Z" fill="#555"/>
<rect x="223" y="189.25" width="12.6" height="14.1" fill="#f4f4f4" stroke="#a8a8a8" stroke-width="0.9"/>
<path d="M226.1 195 L232.5 195 L229.3 198.6 Z" fill="#555"/>
<rect x="278.3" y="189.25" width="12.6" height="14.1" fill="#f4f4f4" stroke="#a8a8a8" stroke-width="0.9"/>
<path d="M281.4 195 L287.8 195 L284.6 198.6 Z" fill="#555"/>
<rect x="366" y="189.25" width="12.6" height="14.1" fill="#f4f4f4" stroke="#a8a8a8" stroke-width="0.9"/>
<path d="M369.1 195 L375.5 195 L372.3 198.6 Z" fill="#555"/>
<rect x="503.5" y="189.25" width="12.6" height="14.1" fill="#f4f4f4" stroke="#a8a8a8" stroke-width="0.9"/>
<path d="M506.6 195 L513 195 L509.8 198.6 Z" fill="#555"/>
<rect x="558.6" y="189.25" width="12.6" height="14.1" fill="#d8d8d8" stroke="#a8a8a8" stroke-width="0.9"/>
<path d="M561.7 195 L568.1 195 L564.9 198.6 Z" fill="#555"/>
<rect x="571.4" y="204.96" width="1.9" height="17.21" fill="#217346"/>
<rect x="570.6" y="220.76" width="3.2" height="3" fill="#217346"/>
<line x1="585" y1="196.6" x2="650.2" y2="196.6" stroke="#ff0000" stroke-width="2.7" stroke-linecap="round"/>
<path d="M576 196.5 L587 192.5 L587 200.5 Z" fill="#ff0000"/>
<rect x="0" y="0" width="1.2" height="727" fill="#217346"/>
<path d="M9.4 0 L23 0 L22.6 0.6 L17.5 2.8 L9.6 1.4 Z" fill="#217346"/>
<defs><linearGradient id="wm" x1="0" x2="1" y1="0" y2="0"><stop offset="0" stop-color="#f5f5f5" stop-opacity="0"/><stop offset="0.22" stop-color="#f5f5f5" stop-opacity="1"/><stop offset="1" stop-color="#f4f4f4" stop-opacity="1"/></linearGradient></defs>
<rect x="610" y="0" width="414" height="28.2" fill="url(#wm)"/>
<ellipse cx="826" cy="8" rx="72" ry="11" fill="#ffffff"/>
<ellipse cx="770" cy="16" rx="30" ry="6" fill="#ffffff" opacity="0.8"/>
<ellipse cx="940" cy="2" rx="46" ry="7" fill="#ffffff"/>
<ellipse cx="975" cy="17" rx="20" ry="9" fill="#ffffff"/>
<ellipse cx="690" cy="3" rx="70" ry="9" fill="#ffffff" opacity="0.8"/>
<rect x="0" y="7.9" width="51.5" height="21" fill="#217346"/>
<text x="11.6" y="22.3" font-size="11.2" fill="#ffffff" textLength="28.6" lengthAdjust="spacingAndGlyphs">ФАЙЛ</text>
<line x1="51.5" y1="28.7" x2="1024" y2="28.7" stroke="#d4d4d4" stroke-width="1"/>
<text x="66" y="22.3" font-size="11" fill="#444444" textLength="45" lengthAdjust="spacingAndGlyphs">ГЛАВНАЯ</text>
<text x="137" y="22.3" font-size="11" fill="#444444" textLength="43" lengthAdjust="spacingAndGlyphs">ВСТАВКА</text>
<text x="205.5" y="22.3" font-size="11" fill="#444444" textLength="109.5" lengthAdjust="spacingAndGlyphs">РАЗМЕТКА СТРАНИЦЫ</text>
<text x="340.5" y="22.3" font-size="11" fill="#444444" textLength="51.2" lengthAdjust="spacingAndGlyphs">ФОРМУЛЫ</text>
<text x="417" y="22.3" font-size="11" fill="#217346" textLength="42" lengthAdjust="spacingAndGlyphs">ДАННЫЕ</text>
<text x="483.7" y="22.3" font-size="11" fill="#444444" textLength="93.3" lengthAdjust="spacingAndGlyphs">РЕЦЕНЗИРОВАНИЕ</text>
<text x="602" y="22.3" font-size="11" fill="#444444" textLength="21" lengthAdjust="spacingAndGlyphs">ВИД</text>
<text x="648" y="22.3" font-size="11" fill="#444444" textLength="70" lengthAdjust="spacingAndGlyphs">РАЗРАБОТЧИК</text>
<path d="M404.5 28.7 L404.5 8.5 L470 8.5 L470 28.7" fill="#ffffff" stroke="#d4d4d4" stroke-width="1"/>
<text x="417" y="22.3" font-size="11" fill="#217346" textLength="42" lengthAdjust="spacingAndGlyphs">ДАННЫЕ</text>
<rect x="404.5" y="5.2" width="65.3" height="21.8" fill="none" stroke="#ff0000" stroke-width="2.6" rx="1.2"/>
<path d="M986 16.1 L990.7 16.1 L988.35 18.8 Z" fill="#5a5055"/>
<rect x="996.4" y="7.8" width="20.5" height="20.8" fill="#ababab"/>
<ellipse cx="1006.6" cy="15" rx="3.75" ry="4.4" fill="#ffffff"/>
<path d="M998.9 28.6 L998.9 24.6 Q998.9 20.6 1003 20.6 L1010.2 20.6 Q1014.3 20.6 1014.3 24.6 L1014.3 28.6 Z" fill="#ffffff"/>
<line x1="1.2" y1="108.2" x2="1024" y2="108.2" stroke="#d4d4d4" stroke-width="1.2"/>
<line x1="94.5" y1="32.5" x2="94.5" y2="104" stroke="#e1e1e1" stroke-width="1"/>
<line x1="252.5" y1="32.5" x2="252.5" y2="104" stroke="#e1e1e1" stroke-width="1"/>
<line x1="487.5" y1="32.5" x2="487.5" y2="104" stroke="#e1e1e1" stroke-width="1"/>
<line x1="808" y1="32.5" x2="808" y2="104" stroke="#e1e1e1" stroke-width="1"/>
<line x1="965.5" y1="32.5" x2="965.5" y2="104" stroke="#e1e1e1" stroke-width="1"/>
<text x="21" y="73.6" font-size="10.3" fill="#444444" textLength="52.7" lengthAdjust="spacingAndGlyphs" stroke="#444444" stroke-width="0.15">Получение</text>
<text x="3.8" y="87.3" font-size="10.3" fill="#444444" textLength="79.9" lengthAdjust="spacingAndGlyphs" stroke="#444444" stroke-width="0.15">внешних данных</text>
<path d="M86.4 81.8 L91.2 81.8 L88.8 84.4 Z" fill="#777"/>
<text x="100" y="75.3" font-size="10.3" fill="#444444" textLength="46" lengthAdjust="spacingAndGlyphs" stroke="#444444" stroke-width="0.15">Обновить</text>
<text x="111.7" y="88.6" font-size="10.3" fill="#444444" textLength="15.8" lengthAdjust="spacingAndGlyphs" stroke="#444444" stroke-width="0.15">все</text>
<path d="M129.2 83.2 L134 83.2 L131.6 85.8 Z" fill="#777"/>
<text x="168" y="45.6" font-size="10.3" fill="#444444" textLength="66" lengthAdjust="spacingAndGlyphs" stroke="#444444" stroke-width="0.15">Подключения</text>
<text x="168" y="65.8" font-size="10.3" fill="#ababab" textLength="43" lengthAdjust="spacingAndGlyphs">Свойства</text>
<text x="168" y="85.6" font-size="10.3" fill="#ababab" textLength="74" lengthAdjust="spacingAndGlyphs">Изменить связи</text>
<text x="141" y="104.9" font-size="10" fill="#555555" textLength="64.5" lengthAdjust="spacingAndGlyphs" stroke="#555555" stroke-width="0.15">Подключения</text>
<text x="277.5" y="75.3" font-size="10.3" fill="#444444" textLength="55.5" lengthAdjust="spacingAndGlyphs" stroke="#444444" stroke-width="0.15">Сортировка</text>
<rect x="341" y="30" width="44" height="62" fill="#9fd5b7"/>
<rect x="341.7" y="30.2" width="43.7" height="61.4" fill="none" stroke="#ff0000" stroke-width="3" rx="1.2"/>
<text x="346" y="75.3" font-size="10.3" fill="#262626" textLength="34.5" lengthAdjust="spacingAndGlyphs" stroke="#262626" stroke-width="0.15">Фильтр</text>
<text x="402.5" y="45.6" font-size="10.3" fill="#ababab" textLength="44.2" lengthAdjust="spacingAndGlyphs">Очистить</text>
<text x="402.5" y="65.8" font-size="10.3" fill="#ababab" textLength="50.5" lengthAdjust="spacingAndGlyphs">Повторить</text>
<text x="402.5" y="85.6" font-size="10.3" fill="#444444" textLength="75" lengthAdjust="spacingAndGlyphs" stroke="#444444" stroke-width="0.15">Дополнительно</text>
<text x="319.5" y="104.9" font-size="10" fill="#555555" textLength="100.5" lengthAdjust="spacingAndGlyphs" stroke="#555555" stroke-width="0.15">Сортировка и фильтр</text>
<text x="497" y="75.3" font-size="10.3" fill="#444444" textLength="40" lengthAdjust="spacingAndGlyphs" stroke="#444444" stroke-width="0.15">Текст по</text>
<text x="493" y="88.6" font-size="10.3" fill="#444444" textLength="47" lengthAdjust="spacingAndGlyphs" stroke="#444444" stroke-width="0.15">столбцам</text>
<text x="561" y="45.6" font-size="10.3" fill="#ababab" textLength="118.5" lengthAdjust="spacingAndGlyphs">Мгновенное заполнение</text>
<text x="561" y="65.8" font-size="10.3" fill="#444444" textLength="91.5" lengthAdjust="spacingAndGlyphs" stroke="#444444" stroke-width="0.15">Удалить дубликаты</text>
<text x="561" y="85.6" font-size="10.3" fill="#444444" textLength="84" lengthAdjust="spacingAndGlyphs" stroke="#444444" stroke-width="0.15">Проверка данных</text>
<path d="M653.6 80.8 L658.4 80.8 L656 83.4 Z" fill="#777"/>
<text x="704.5" y="45.6" font-size="10.3" fill="#444444" textLength="68" lengthAdjust="spacingAndGlyphs" stroke="#444444" stroke-width="0.15">Консолидация</text>
<text x="704.5" y="65.8" font-size="10.3" fill="#444444" textLength="85.5" lengthAdjust="spacingAndGlyphs" stroke="#444444" stroke-width="0.15">Анализ "что если"</text>
<path d="M793.6 61 L798.4 61 L796 63.6 Z" fill="#777"/>
<text x="704.5" y="85.6" font-size="10.3" fill="#ababab" textLength="56" lengthAdjust="spacingAndGlyphs">Отношения</text>
<text x="607" y="104.9" font-size="10" fill="#555555" textLength="82.5" lengthAdjust="spacingAndGlyphs" stroke="#555555" stroke-width="0.15">Работа с данными</text>
<text x="831" y="45.6" font-size="10.3" fill="#444444" textLength="66" lengthAdjust="spacingAndGlyphs" stroke="#444444" stroke-width="0.15">Группировать</text>
<path d="M904.6 41.1 L909.4 41.1 L907 43.7 Z" fill="#777"/>
<text x="831" y="65.8" font-size="10.3" fill="#444444" textLength="80" lengthAdjust="spacingAndGlyphs" stroke="#444444" stroke-width="0.15">Разгруппировать</text>
<path d="M919.6 61 L924.4 61 L922 63.6 Z" fill="#777"/>
<text x="831" y="85.6" font-size="10.3" fill="#444444" textLength="104.5" lengthAdjust="spacingAndGlyphs" stroke="#444444" stroke-width="0.15">Промежуточный итог</text>
<text x="857" y="104.9" font-size="10" fill="#555555" textLength="45" lengthAdjust="spacingAndGlyphs" stroke="#555555" stroke-width="0.15">Структура</text>
<path d="M1010 103.5 L1013.5 100 L1017 103.5" fill="none" stroke="#555" stroke-width="1.4"/>
<path d="M955 99.5 L955 104.5 M955 99.5 L960 99.5" fill="none" stroke="#888" stroke-width="1"/>
<path d="M957 101.5 L960.5 105 M960.5 102.2 L960.5 105 L957.7 105" fill="none" stroke="#888" stroke-width="1"/>
<rect x="6.9" y="114.9" width="10.6" height="11" fill="#ffffff" stroke="#80409a" stroke-width="1.4"/>
<rect x="6.9" y="121" width="10.6" height="4.9" fill="#80409a"/>
<rect x="10.4" y="123.9" width="1.7" height="2" fill="#ffffff"/>
<path d="M35.6 115 L31.6 119 L35.6 123" fill="none" stroke="#2b78c5" stroke-width="1.6"/>
<path d="M31.8 119 L38.6 119 Q42.8 119.4 42.6 122.3 Q42.2 125 38 125.4" fill="none" stroke="#2b78c5" stroke-width="1.6"/>
<path d="M47.7 118.7 L52.5 118.7 L50.1 121.3 Z" fill="#5a5055"/>
<path d="M73.4 115 L77.4 119 L73.4 123" fill="none" stroke="#b4b4b4" stroke-width="1.6"/>
<path d="M77.2 119 L70.4 119 Q66.2 119.4 66.4 122.3 Q66.8 125 71 125.4" fill="none" stroke="#b4b4b4" stroke-width="1.6"/>
<path d="M82.6 118.7 L87.4 118.7 L85 121.3 Z" fill="#c4c4c4"/>
<line x1="103.2" y1="119" x2="107.8" y2="119" stroke="#5a5055" stroke-width="1.1"/>
<path d="M103.1 121.2 L107.9 121.2 L105.5 123.8 Z" fill="#5a5055"/>
<rect x="5.7" y="140.8" width="86.8" height="21.2" fill="#ffffff" stroke="#c6c6c6" stroke-width="1"/>
<text x="11" y="156.2" font-size="12.4" fill="#3a3a3a" textLength="14.2" lengthAdjust="spacingAndGlyphs">G2</text>
<path d="M80.5 149 L86.5 149 L83.5 152.4 Z" fill="#5a5055"/>
<rect x="105" y="146.95" width="1.5" height="1.5" fill="#8a8a8a"/>
<rect x="105" y="150.75" width="1.5" height="1.5" fill="#8a8a8a"/>
<rect x="105" y="154.65" width="1.5" height="1.5" fill="#8a8a8a"/>
<rect x="118.8" y="140.8" width="93.7" height="21.2" fill="#ffffff" stroke="#c6c6c6" stroke-width="1"/>
<path d="M128 145.4 L141.4 157.4 M140.6 145.4 L128.4 157.4" fill="none" stroke="#c3c3c3" stroke-width="1.9"/>
<path d="M158.6 152.6 L164 157.6 L173.8 146" fill="none" stroke="#c3c3c3" stroke-width="2.4"/>
<text x="188.6" y="157.2" font-size="20" fill="#5a5055" font-weight="bold" font-style="italic" font-family='"Liberation Serif", serif' textLength="6.66" lengthAdjust="spacingAndGlyphs">f</text>
<text x="195.6" y="157.2" font-size="14.5" fill="#5a5055" font-weight="bold" font-style="italic" font-family='"Liberation Serif", serif' textLength="8.06" lengthAdjust="spacingAndGlyphs">x</text>
<rect x="216.3" y="140.8" width="804.8" height="21.2" fill="#ffffff" stroke="#c6c6c6" stroke-width="1"/>
<text x="226.3" y="156.4" font-size="12.6" fill="#3a3a3a" textLength="143.2" lengthAdjust="spacingAndGlyphs">=СЧИТАТЬПУСТОТЫ(A2:F2)</text>
<path d="M1009.7 150.2 L1014.2 154.6 L1018.7 150.2" fill="none" stroke="#5a5050" stroke-width="2.4"/>
<rect x="1010.6" y="173.8" width="12" height="11.4" fill="#ffffff" stroke="#ababab" stroke-width="0.9"/>
<path d="M1013.6 181.4 L1016.6 177.8 L1019.6 181.4 Z" fill="#555"/>
<rect x="1010.6" y="185.5" width="12" height="499.2" fill="#ffffff" stroke="#ababab" stroke-width="0.9"/>
<rect x="1010.2" y="685.4" width="12.8" height="30.4" fill="#f3f3f3"/>
<rect x="1010.6" y="716" width="12" height="12" fill="#ffffff" stroke="#ababab" stroke-width="0.9"/>
<path d="M1013.6 719.6 L1019.6 719.6 L1016.6 723.2 Z" fill="#555"/>
<rect x="332.9" y="205.3" width="241.5" height="344.2" fill="#000000" opacity="0.10"/>
<rect x="331.4" y="203.8" width="240.3" height="343" fill="#ffffff" stroke="#c6c6c6" stroke-width="1"/>
<rect x="331.9" y="537.6" width="239.3" height="8.7" fill="#f8f8f8"/>
<line x1="331.9" y1="537.4" x2="571.2" y2="537.4" stroke="#cfcfcf" stroke-width="0.9" stroke-dasharray="1 1.2"/>
<rect x="566.95" y="543.05" width="1.3" height="1.3" fill="#8a8a8a"/>
<rect x="563.65" y="543.05" width="1.3" height="1.3" fill="#8a8a8a"/>
<rect x="566.95" y="539.75" width="1.3" height="1.3" fill="#8a8a8a"/>
<text x="358.6" y="218.8" font-size="10.3" fill="#4d4d4d" textLength="135.4" lengthAdjust="spacingAndGlyphs">Сортировка по возрастанию</text>
<line x1="432.18" y1="220.4" x2="437.66" y2="220.4" stroke="#4d4d4d" stroke-width="0.8"/>
<text x="358.6" y="239.4" font-size="10.3" fill="#4d4d4d" textLength="123.4" lengthAdjust="spacingAndGlyphs">Сортировка по убыванию</text>
<line x1="457.01" y1="241" x2="462.79" y2="241" stroke="#4d4d4d" stroke-width="0.8"/>
<text x="358.6" y="259.9" font-size="10.3" fill="#4d4d4d" textLength="98.9" lengthAdjust="spacingAndGlyphs">Сортировка по цвету</text>
<line x1="358.6" y1="261.5" x2="365.94" y2="261.5" stroke="#4d4d4d" stroke-width="0.8"/>
<line x1="358" y1="267.6" x2="571.2" y2="267.6" stroke="#e1e1e1" stroke-width="1"/>
<text x="358.6" y="281.8" font-size="10.3" fill="#ababab" textLength="191.9" lengthAdjust="spacingAndGlyphs">Удалить фильтр из столбца "Индикатор"</text>
<line x1="358.6" y1="283.4" x2="365.08" y2="283.4" stroke="#ababab" stroke-width="0.8"/>
<text x="358.6" y="303.2" font-size="10.3" fill="#ababab" textLength="78.4" lengthAdjust="spacingAndGlyphs">Фильтр по цвету</text>
<line x1="358.6" y1="304.8" x2="366.45" y2="304.8" stroke="#ababab" stroke-width="0.8"/>
<text x="358.6" y="323.9" font-size="10.3" fill="#4d4d4d" textLength="93.4" lengthAdjust="spacingAndGlyphs">Числовые фильтры</text>
<line x1="409.5" y1="325.5" x2="417.95" y2="325.5" stroke="#4d4d4d" stroke-width="0.8"/>
<line x1="358" y1="330.8" x2="571.2" y2="330.8" stroke="#e1e1e1" stroke-width="1"/>
<path d="M559.6 253.3 L562.8 256.3 L559.6 259.3 Z" fill="#555"/>
<path d="M559.6 296.6 L562.8 299.6 L559.6 302.6 Z" fill="#c0c0c0"/>
<path d="M559.6 317.3 L562.8 320.3 L559.6 323.3 Z" fill="#555"/>
<text x="336.6" y="213.8" font-size="8.2" fill="#2b78c5" font-weight="bold" textLength="5.92" lengthAdjust="spacingAndGlyphs">А</text>
<text x="336.6" y="220.5" font-size="8.2" fill="#7f3f98" font-weight="bold" textLength="5.89" lengthAdjust="spacingAndGlyphs">Я</text>
<line x1="346.1" y1="208.8" x2="346.1" y2="219.7" stroke="#555" stroke-width="1.1"/>
<path d="M343.5 217.2 L346.1 220.6 L348.7 217.2" fill="none" stroke="#555" stroke-width="1.1"/>
<text x="336.6" y="234.4" font-size="8.2" fill="#7f3f98" font-weight="bold" textLength="5.89" lengthAdjust="spacingAndGlyphs">Я</text>
<text x="336.6" y="241.1" font-size="8.2" fill="#2b78c5" font-weight="bold" textLength="5.92" lengthAdjust="spacingAndGlyphs">А</text>
<line x1="346.1" y1="229.4" x2="346.1" y2="240.3" stroke="#555" stroke-width="1.1"/>
<path d="M343.5 237.8 L346.1 241.2 L348.7 237.8" fill="none" stroke="#555" stroke-width="1.1"/>
<path d="M336.2 272.8 L346 272.8 L346 273.8 L342.2 277.6 L342.2 281.4 L340 281.4 L340 277.6 L336.2 273.8 Z" fill="#a8a8a8"/>
<path d="M342 279.6 L348.4 285 M348.4 279.6 L342 285" fill="none" stroke="#9a9a9a" stroke-width="1.1"/>
<rect x="358.2" y="336.3" width="207.4" height="16.4" fill="#ffffff" stroke="#ababab" stroke-width="1"/>
<text x="360.2" y="348.2" font-size="10.3" fill="#8a8a8a" textLength="29.5" lengthAdjust="spacingAndGlyphs">Поиск</text>
<circle cx="558.6" cy="342.9" r="2.9" fill="none" stroke="#2b78c5" stroke-width="1.3"/>
<line x1="556.6" y1="345.2" x2="553.3" y2="348.6" stroke="#2b78c5" stroke-width="1.7"/>
<rect x="358.2" y="356.8" width="207" height="144.4" fill="#ffffff" stroke="#d9d9d9" stroke-width="1"/>
<path d="M369.3 363.9 L377.3 363.9 M369.3 363.9 L369.3 405.2 M369.3 377.8 L377.3 377.8 M369.3 391.4 L377.3 391.4 M369.3 405.2 L377.3 405.2" fill="none" stroke="#8a8a8a" stroke-width="0.9" stroke-dasharray="1 1.2"/>
<rect x="377.9" y="359.4" width="8.6" height="8.6" fill="#ffffff" stroke="#7a7a7a" stroke-width="0.9"/>
<rect x="379.7" y="361.2" width="5" height="5" fill="#111"/>
<text x="389.8" y="367.2" font-size="9.3" fill="#1a1a1a" textLength="64.5" lengthAdjust="spacingAndGlyphs">(Выделить все)</text>
<rect x="377.9" y="373.3" width="8.6" height="8.6" fill="#ffffff" stroke="#7a7a7a" stroke-width="0.9"/>
<text x="389.9" y="380.8" font-size="10" fill="#1a1a1a" textLength="4.67" lengthAdjust="spacingAndGlyphs">0</text>
<rect x="377.9" y="386.9" width="8.6" height="8.6" fill="#ffffff" stroke="#7a7a7a" stroke-width="0.9"/>
<text x="389.9" y="394.5" font-size="10" fill="#1a1a1a" textLength="4.67" lengthAdjust="spacingAndGlyphs">1</text>
<rect x="377.9" y="400.5" width="8.6" height="8.6" fill="#ffffff" stroke="#7a7a7a" stroke-width="0.9"/>
<path d="M379.6 405 L381.8 407.4 L385.4 402.2" fill="none" stroke="#111" stroke-width="1.7"/>
<rect x="388.4" y="398.6" width="7.8" height="13" fill="#0a6ad8"/>
<text x="389.9" y="408.1" font-size="10" fill="#ffffff" textLength="4.67" lengthAdjust="spacingAndGlyphs">6</text>
<rect x="388.4" y="398.6" width="7.8" height="13" fill="none" stroke="#333" stroke-width="0.7" stroke-dasharray="1 1"/>
<line x1="414" y1="403.6" x2="489" y2="399.5" stroke="#ff0000" stroke-width="2.3" stroke-linecap="round"/>
<path d="M403.5 404.2 L415.8 400 L416.3 407.8 Z" fill="#ff0000"/>
<rect x="430.4" y="515.3" width="61.8" height="16.7" fill="#e3e3e3" stroke="#1473cf" stroke-width="1.7"/>
<text x="461.3" y="527.1" font-size="9.6" fill="#1a1a1a" text-anchor="middle" textLength="13.06" lengthAdjust="spacingAndGlyphs">ОК</text>
<rect x="502.8" y="515.2" width="61.8" height="16.8" fill="#e3e3e3" stroke="#adadad" stroke-width="1"/>
<text x="533.7" y="527.1" font-size="9.6" fill="#1a1a1a" text-anchor="middle" textLength="35" lengthAdjust="spacingAndGlyphs">Отмена</text>
<rect x="33.4" y="32.8" width="25.5" height="25.6" fill="#ffffff" stroke="#dcdcdc" stroke-width="1"/>
<path d="M42 39.4 L48.8 39.4 L51.6 42.2 L51.6 52 L42 52 Z" fill="#ffffff" stroke="#6a6a6a" stroke-width="0.9"/>
<line x1="43.4" y1="43" x2="47" y2="43" stroke="#8a8a8a" stroke-width="0.8"/>
<line x1="43.4" y1="45.4" x2="47" y2="45.4" stroke="#8a8a8a" stroke-width="0.8"/>
<line x1="43.4" y1="47.8" x2="47" y2="47.8" stroke="#8a8a8a" stroke-width="0.8"/>
<line x1="43.4" y1="50.2" x2="47" y2="50.2" stroke="#8a8a8a" stroke-width="0.8"/>
<path d="M48 45 Q51.2 43.4 54.4 45 L54.4 51.6 Q51.2 53.4 48 51.6 Z" fill="#f2a33a"/>
<path d="M48 47.2 Q51.2 48.8 54.4 47.2 M48 49.4 Q51.2 51 54.4 49.4" fill="none" stroke="#fbd9a0" stroke-width="0.7"/>
<path d="M112 56.2 L112 36.2 L122 36.2" fill="none" stroke="#6a6a6a" stroke-width="0.9"/>
<path d="M114.6 57.63 L114.6 37.63 L124.6 37.63" fill="none" stroke="#6a6a6a" stroke-width="0.9"/>
<path d="M117.2 39.06 L127.6 39.06 L132.2 43.66 L132.2 60.06 L117.2 60.06 Z" fill="#ffffff" stroke="#6a6a6a" stroke-width="0.9"/>
<path d="M127.6 39.06 L127.6 43.66 L132.2 43.66" fill="none" stroke="#6a6a6a" stroke-width="0.9"/>
<circle cx="130.8" cy="55" r="6.6" fill="#ffffff"/>
<path d="M126.2 54 A4.8 4.8 0 0 1 134.6 51.6" fill="none" stroke="#3aa276" stroke-width="2.2"/>
<path d="M136.9 49.4 L136.9 54.4 L131.9 54.4 Z" fill="#3aa276"/>
<path d="M135.4 56 A4.8 4.8 0 0 1 127 58.4" fill="none" stroke="#3aa276" stroke-width="2.2"/>
<path d="M124.7 60.6 L124.7 55.6 L129.7 55.6 Z" fill="#3aa276"/>
<rect x="151.6" y="35.8" width="11.8" height="8.6" fill="#ffffff" stroke="#6a6a6a" stroke-width="1"/>
<line x1="151" y1="46" x2="164" y2="46" stroke="#6a6a6a" stroke-width="1.1"/>
<path d="M157.5 37.6 L160 40.1 L157.5 42.6 L155 40.1 Z" fill="#ffffff" stroke="#2b78c5" stroke-width="1.3"/>
<rect x="152.5" y="54.6" width="11.2" height="12.8" fill="#ffffff" stroke="#bdbdbd" stroke-width="1"/>
<rect x="152.5" y="54.6" width="11.2" height="2.2" fill="#bdbdbd"/>
<rect x="154.4" y="59.5" width="1.8" height="1.8" fill="#bdbdbd"/>
<line x1="157.4" y1="60.4" x2="161.8" y2="60.4" stroke="#bdbdbd" stroke-width="0.9"/>
<rect x="154.4" y="63" width="1.8" height="1.8" fill="#bdbdbd"/>
<line x1="157.4" y1="63.9" x2="161.8" y2="63.9" stroke="#bdbdbd" stroke-width="0.9"/>
<path d="M155 75.4 L160.2 75.4 L162.8 78 L162.8 86.4 L155 86.4 Z" fill="#ffffff" stroke="#bdbdbd" stroke-width="0.9"/>
<ellipse cx="157.6" cy="85" rx="2.4" ry="1.7" fill="#fff" stroke="#bdbdbd" stroke-width="1"/>
<ellipse cx="161.4" cy="85" rx="2.4" ry="1.7" fill="none" stroke="#bdbdbd" stroke-width="1"/>
<text x="260.4" y="47.5" font-size="8.4" fill="#2b78c5" font-weight="bold" textLength="6.07" lengthAdjust="spacingAndGlyphs">А</text>
<text x="260.4" y="54.2" font-size="8.4" fill="#7f3f98" font-weight="bold" textLength="6.04" lengthAdjust="spacingAndGlyphs">Я</text>
<line x1="269.6" y1="42" x2="269.6" y2="53.6" stroke="#555" stroke-width="1.1"/>
<path d="M266.9 50.9 L269.6 54.4 L272.3 50.9" fill="none" stroke="#555" stroke-width="1.1"/>
<text x="260.4" y="73.7" font-size="8.4" fill="#7f3f98" font-weight="bold" textLength="6.04" lengthAdjust="spacingAndGlyphs">Я</text>
<text x="260.4" y="80.4" font-size="8.4" fill="#2b78c5" font-weight="bold" textLength="6.07" lengthAdjust="spacingAndGlyphs">А</text>
<line x1="269.6" y1="68.2" x2="269.6" y2="79.8" stroke="#555" stroke-width="1.1"/>
<path d="M266.9 77.1 L269.6 80.6 L272.3 77.1" fill="none" stroke="#555" stroke-width="1.1"/>
<rect x="292.4" y="37.2" width="25" height="21.2" fill="#ffffff" stroke="#9a9a9a" stroke-width="1"/>
<rect x="292.2" y="37" width="25.4" height="2.6" fill="#2b78c5"/>
<line x1="304.9" y1="39.6" x2="304.9" y2="58.4" stroke="#9a9a9a" stroke-width="1"/>
<text x="298.5" y="48.2" font-size="9.4" fill="#7f3f98" text-anchor="middle" font-weight="bold" textLength="5.74" lengthAdjust="spacingAndGlyphs">Z</text>
<text x="298.5" y="56.9" font-size="9.4" fill="#2b78c5" text-anchor="middle" font-weight="bold" textLength="6.79" lengthAdjust="spacingAndGlyphs">A</text>
<text x="311.3" y="48.2" font-size="9.4" fill="#2b78c5" text-anchor="middle" font-weight="bold" textLength="6.79" lengthAdjust="spacingAndGlyphs">A</text>
<text x="311.3" y="56.9" font-size="9.4" fill="#7f3f98" text-anchor="middle" font-weight="bold" textLength="5.74" lengthAdjust="spacingAndGlyphs">Z</text>
<path d="M351.6 36 L375.24 36 L375.24 37.58 L365.78 47.43 L365.78 58.16 L361.06 58.16 L361.06 47.43 L351.6 37.58 Z" fill="#767676"/>
<path d="M388 35 L398.32 35 L398.32 35.69 L394.19 39.99 L394.19 44.67 L392.13 44.67 L392.13 39.99 L388 35.69 Z" fill="#bdbdbd"/>
<path d="M393.6 42.4 L398.8 47.4 M398.8 42.4 L393.6 47.4" fill="none" stroke="#bdbdbd" stroke-width="1.1"/>
<path d="M388 55.4 L398.32 55.4 L398.32 56.09 L394.19 60.39 L394.19 65.08 L392.13 65.08 L392.13 60.39 L388 56.09 Z" fill="#bdbdbd"/>
<circle cx="396" cy="64.6" r="2.7" fill="#fff" stroke="#bdbdbd" stroke-width="1"/>
<path d="M388 75 L398.32 75 L398.32 75.69 L394.19 79.99 L394.19 84.67 L392.13 84.67 L392.13 79.99 L388 75.69 Z" fill="#5a5a5a"/>
<path d="M392.4 87.4 L393.2 84.6 L398.4 79.4 L400.2 81.2 L395 86.4 Z" fill="#2b78c5"/>
<rect x="503.6" y="44.2" width="14" height="13.8" fill="#ffffff" stroke="#7a7a7a" stroke-width="1"/>
<line x1="505.6" y1="47" x2="515.6" y2="47" stroke="#2b78c5" stroke-width="1"/>
<line x1="505.6" y1="49.6" x2="515.6" y2="49.6" stroke="#2b78c5" stroke-width="1"/>
<line x1="505.6" y1="52.2" x2="515.6" y2="52.2" stroke="#2b78c5" stroke-width="1"/>
<line x1="505.6" y1="54.8" x2="515.6" y2="54.8" stroke="#2b78c5" stroke-width="1"/>
<rect x="519.4" y="46.4" width="10.8" height="9.4" fill="#ffffff" stroke="#7a7a7a" stroke-width="1"/>
<line x1="519.4" y1="48.6" x2="530.2" y2="48.6" stroke="#7a7a7a" stroke-width="1.2"/>
<rect x="521" y="50.2" width="3.2" height="3.6" fill="#cfe0f3" stroke="#2b78c5" stroke-width="0.7"/>
<rect x="525.4" y="50.2" width="3.2" height="3.6" fill="#cfe0f3" stroke="#2b78c5" stroke-width="0.7"/>
<path d="M511.6 41.6 Q516.5 33.6 523.4 40.6" fill="none" stroke="#2b78c5" stroke-width="1.5"/>
<path d="M520.2 40.6 L524.4 43.8 L526.4 38.8" fill="none" stroke="#2b78c5" stroke-width="1.5"/>
<rect x="545.4" y="35.8" width="10.6" height="10.4" fill="#ffffff" stroke="#bdbdbd" stroke-width="1"/>
<line x1="546.6" y1="38.4" x2="554.8" y2="38.4" stroke="#bdbdbd" stroke-width="0.9"/>
<line x1="546.6" y1="41" x2="554.8" y2="41" stroke="#bdbdbd" stroke-width="0.9"/>
<line x1="546.6" y1="43.6" x2="554.8" y2="43.6" stroke="#bdbdbd" stroke-width="0.9"/>
<path d="M555.2 41.4 L558 38.6 L556 44.4 L558.4 43.4 L555 48" fill="none" stroke="#bdbdbd" stroke-width="0.9"/>
<rect x="545.4" y="55.6" width="3.6" height="10.8" fill="#ffffff" stroke="#6a6a6a" stroke-width="0.9"/>
<rect x="545.9" y="56.2" width="2.6" height="3" fill="#2b78c5"/>
<rect x="545.9" y="59.6" width="2.6" height="3" fill="#f2a33a"/>
<rect x="545.9" y="63" width="2.6" height="3" fill="#2b78c5"/>
<rect x="555" y="55.6" width="3.6" height="10.8" fill="#ffffff" stroke="#6a6a6a" stroke-width="0.9"/>
<rect x="555.5" y="56.2" width="2.6" height="3" fill="#2b78c5"/>
<rect x="555.5" y="59.6" width="2.6" height="3" fill="#f2a33a"/>
<path d="M549.8 61 L553.6 61 M552 59.4 L553.8 61 L552 62.6" fill="none" stroke="#2b78c5" stroke-width="0.9"/>
<rect x="545.4" y="77.4" width="8" height="3.6" fill="#ffffff" stroke="#7a7a7a" stroke-width="0.9"/>
<rect x="545.4" y="82.6" width="8" height="3.6" fill="#ffffff" stroke="#7a7a7a" stroke-width="0.9"/>
<path d="M552.6 77.6 L554.6 79.8 L558.4 74.8" fill="none" stroke="#3aa276" stroke-width="1.4"/>
<circle cx="555.8" cy="84.6" r="2.7" fill="#fff" stroke="#e8762c" stroke-width="1.2"/>
<line x1="554" y1="82.8" x2="557.6" y2="86.4" stroke="#e8762c" stroke-width="1"/>
<rect x="688" y="36" width="3" height="10.4" fill="#ffffff" stroke="#6a6a6a" stroke-width="0.9"/>
<line x1="688" y1="38.6" x2="691" y2="38.6" stroke="#6a6a6a" stroke-width="0.8"/>
<line x1="688" y1="41.2" x2="691" y2="41.2" stroke="#6a6a6a" stroke-width="0.8"/>
<line x1="688" y1="43.8" x2="691" y2="43.8" stroke="#6a6a6a" stroke-width="0.8"/>
<path d="M695.6 41 L692.4 41 M693.8 39.6 L692.2 41 L693.8 42.4" fill="none" stroke="#2b78c5" stroke-width="0.9"/>
<rect x="696.8" y="39" width="4.2" height="4" fill="#ffffff" stroke="#e23c3c" stroke-width="1.1"/>
<rect x="688" y="54.6" width="9.6" height="9.6" fill="#ffffff" stroke="#7a7a7a" stroke-width="0.9"/>
<line x1="688" y1="57.8" x2="697.6" y2="57.8" stroke="#7a7a7a" stroke-width="0.8"/>
<line x1="688" y1="61" x2="697.6" y2="61" stroke="#7a7a7a" stroke-width="0.8"/>
<line x1="691.2" y1="54.6" x2="691.2" y2="64.2" stroke="#7a7a7a" stroke-width="0.8"/>
<line x1="694.4" y1="54.6" x2="694.4" y2="64.2" stroke="#7a7a7a" stroke-width="0.8"/>
<rect x="691.4" y="58" width="2.8" height="2.8" fill="#f2a33a"/>
<text x="695.6" y="67.4" font-size="10" fill="#2b78c5" font-weight="bold" textLength="6.11" lengthAdjust="spacingAndGlyphs">?</text>
<rect x="688" y="78.4" width="4.2" height="4.2" fill="#ffffff" stroke="#bdbdbd" stroke-width="0.9"/>
<rect x="696.4" y="74.4" width="4.6" height="4" fill="#ffffff" stroke="#bdbdbd" stroke-width="0.9"/>
<rect x="696.4" y="83" width="4.6" height="4" fill="#ffffff" stroke="#bdbdbd" stroke-width="0.9"/>
<path d="M692.2 80.4 L694.4 80.4 L694.4 76.4 L696.4 76.4 M694.4 80.4 L694.4 85 L696.4 85" fill="none" stroke="#bdbdbd" stroke-width="0.9"/>
<rect x="821.4" y="35.6" width="6.4" height="10.8" fill="#ffffff" stroke="#7a7a7a" stroke-width="0.9"/>
<line x1="821.4" y1="39.2" x2="827.8" y2="39.2" stroke="#8a8a8a" stroke-width="0.7"/>
<line x1="821.4" y1="42.8" x2="827.8" y2="42.8" stroke="#8a8a8a" stroke-width="0.7"/>
<rect x="822.6" y="36.7" width="4" height="1.5" fill="#5b9bd5"/>
<rect x="822.6" y="40.3" width="4" height="1.5" fill="#5b9bd5"/>
<rect x="822.6" y="43.9" width="4" height="1.5" fill="#5b9bd5"/>
<path d="M821 36.4 L817 36.4 L817 38.4 M817 43.6 L817 45.6 L821 45.6" fill="none" stroke="#6a6a6a" stroke-width="0.9" stroke-dasharray="1.3 0.9"/>
<rect x="814.7" y="38.6" width="4.4" height="4.8" fill="#ffffff" stroke="#6a6a6a" stroke-width="0.8"/>
<rect x="816" y="40.6" width="1.8" height="0.9" fill="#444"/>
<rect x="816.45" y="40.1" width="0.9" height="1.9" fill="#444"/>
<rect x="821.4" y="55.4" width="6.4" height="10.8" fill="#ffffff" stroke="#7a7a7a" stroke-width="0.9"/>
<line x1="821.4" y1="59" x2="827.8" y2="59" stroke="#8a8a8a" stroke-width="0.7"/>
<line x1="821.4" y1="62.6" x2="827.8" y2="62.6" stroke="#8a8a8a" stroke-width="0.7"/>
<rect x="822.6" y="56.5" width="4" height="1.5" fill="#5b9bd5"/>
<rect x="822.6" y="60.1" width="4" height="1.5" fill="#5b9bd5"/>
<rect x="822.6" y="63.7" width="4" height="1.5" fill="#5b9bd5"/>
<path d="M821 56.2 L817 56.2 L817 58.2 M817 63.4 L817 65.4 L821 65.4" fill="none" stroke="#6a6a6a" stroke-width="0.9" stroke-dasharray="1.3 0.9"/>
<rect x="814.5" y="57.8" width="4.8" height="6" fill="#ffffff" stroke="#e8392c" stroke-width="1.2"/>
<line x1="815" y1="63.4" x2="818.8" y2="58.2" stroke="#e8392c" stroke-width="1"/>
<rect x="821.4" y="75.2" width="6.6" height="11.8" fill="#ffffff" stroke="#7a7a7a" stroke-width="0.9"/>
<line x1="821.4" y1="78.15" x2="828" y2="78.15" stroke="#8a8a8a" stroke-width="0.7"/>
<line x1="821.4" y1="81.1" x2="828" y2="81.1" stroke="#8a8a8a" stroke-width="0.7"/>
<line x1="821.4" y1="84.05" x2="828" y2="84.05" stroke="#8a8a8a" stroke-width="0.7"/>
<line x1="824.7" y1="75.2" x2="824.7" y2="87" stroke="#8a8a8a" stroke-width="0.6"/>
<rect x="825.3" y="78.8" width="2.1" height="1.6" fill="#5b9bd5"/>
<rect x="825.3" y="81.8" width="2.1" height="1.6" fill="#f2a33a"/>
<rect x="822.2" y="84.7" width="1.9" height="1.5" fill="#5b9bd5"/>
<rect x="814.7" y="75.6" width="4.4" height="4.6" fill="#ffffff" stroke="#6a6a6a" stroke-width="0.8"/>
<rect x="816" y="77.5" width="1.8" height="0.9" fill="#444"/>
<rect x="814.7" y="82" width="4.4" height="4.6" fill="#ffffff" stroke="#6a6a6a" stroke-width="0.8"/>
<rect x="816" y="83.9" width="1.8" height="0.9" fill="#444"/>
<rect x="816.45" y="76.95" width="0.9" height="1.9" fill="#444"/>
<line x1="949.6" y1="36.3" x2="956.6" y2="36.3" stroke="#bdbdbd" stroke-width="0.9"/>
<line x1="953" y1="39.3" x2="956.6" y2="39.3" stroke="#bdbdbd" stroke-width="0.9"/>
<line x1="953" y1="42.3" x2="956.6" y2="42.3" stroke="#bdbdbd" stroke-width="0.9"/>
<line x1="953" y1="45.3" x2="956.6" y2="45.3" stroke="#bdbdbd" stroke-width="0.9"/>
<line x1="956.6" y1="36.3" x2="956.6" y2="45.9" stroke="#bdbdbd" stroke-width="0.9"/>
<line x1="945" y1="38.7" x2="949.4" y2="38.7" stroke="#a8a8a8" stroke-width="1.2"/>
<line x1="947.2" y1="36.5" x2="947.2" y2="40.9" stroke="#a8a8a8" stroke-width="1.2"/>
<line x1="949.6" y1="56.4" x2="956.6" y2="56.4" stroke="#bdbdbd" stroke-width="0.9"/>
<line x1="953" y1="59.4" x2="956.6" y2="59.4" stroke="#bdbdbd" stroke-width="0.9"/>
<line x1="953" y1="62.4" x2="956.6" y2="62.4" stroke="#bdbdbd" stroke-width="0.9"/>
<line x1="953" y1="65.4" x2="956.6" y2="65.4" stroke="#bdbdbd" stroke-width="0.9"/>
<line x1="956.6" y1="56.4" x2="956.6" y2="66" stroke="#bdbdbd" stroke-width="0.9"/>
<line x1="945" y1="58.8" x2="949.4" y2="58.8" stroke="#a8a8a8" stroke-width="1.2"/>
</g>
</svg>
</body>
</html>
